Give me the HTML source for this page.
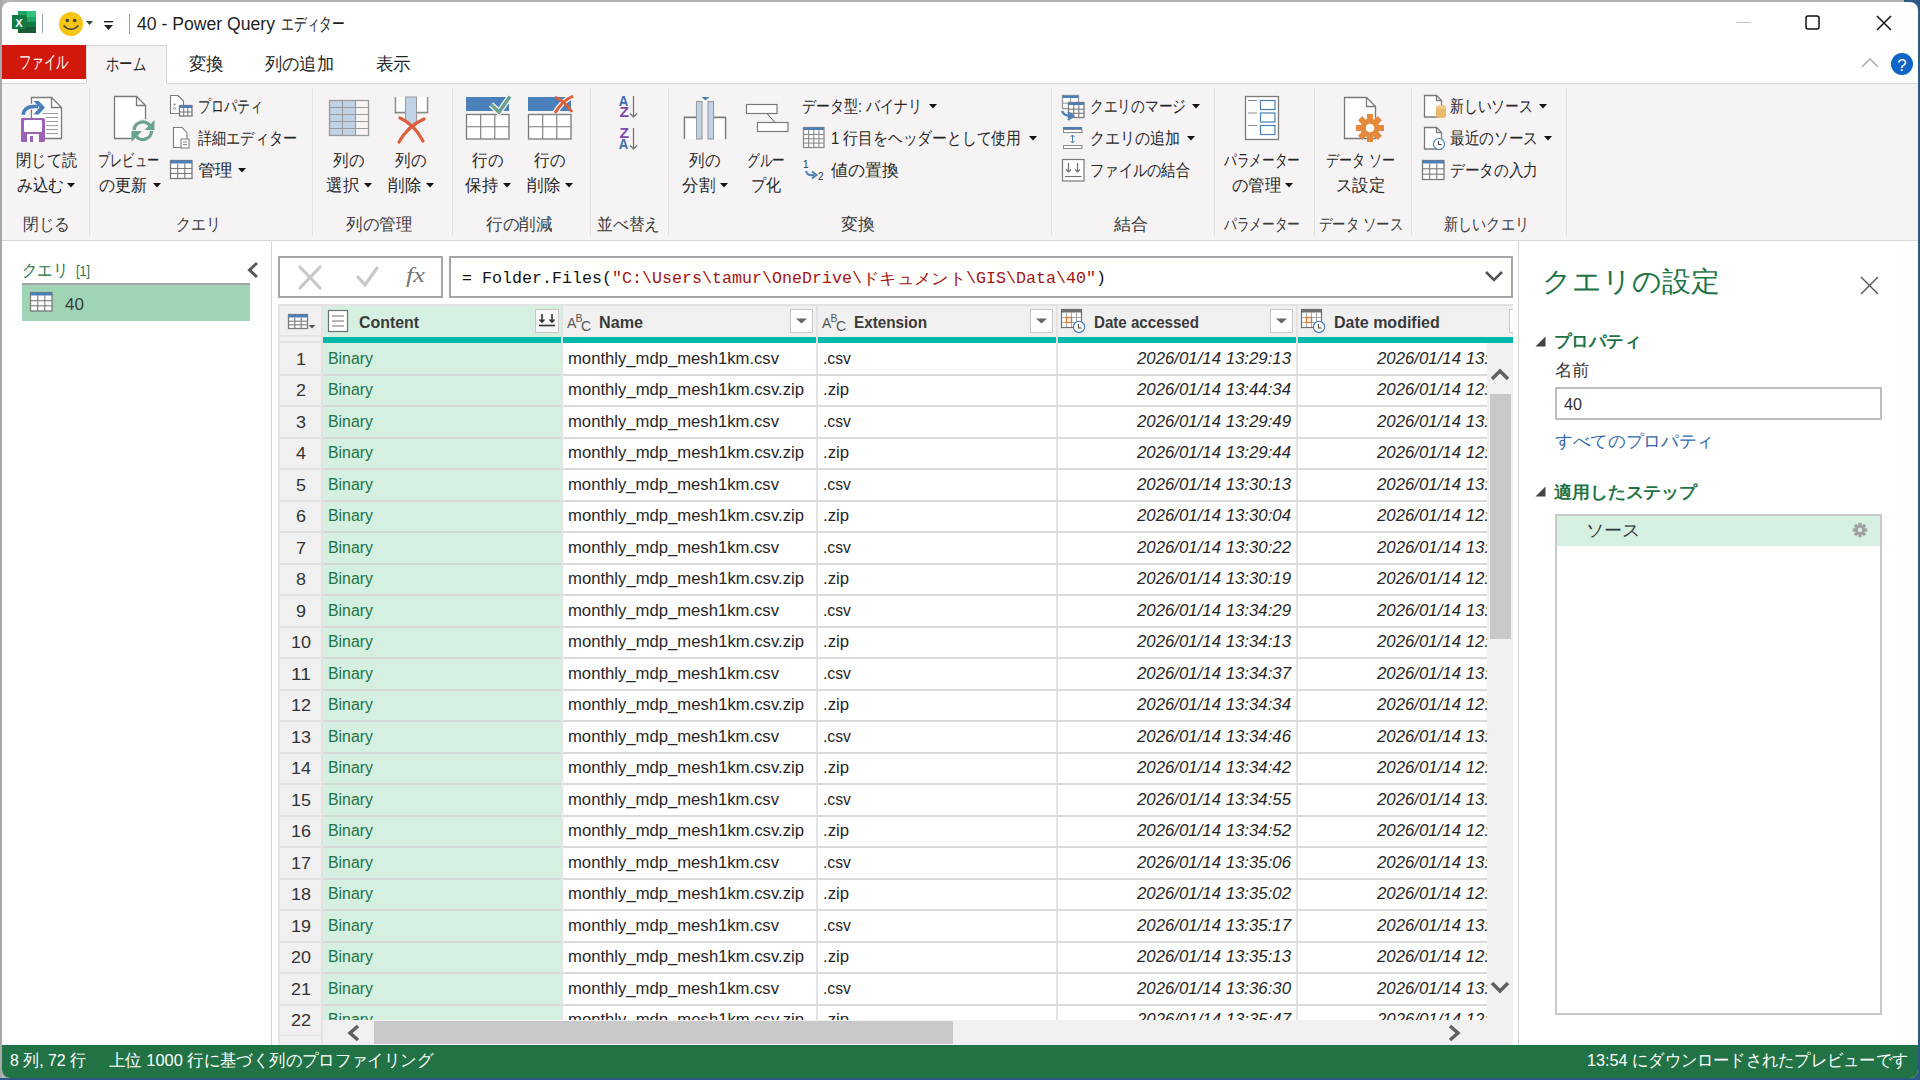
<!DOCTYPE html>
<html><head><meta charset="utf-8"><style>
html,body{margin:0;padding:0;width:1920px;height:1080px;overflow:hidden;background:#2d5a85;font-family:'Liberation Sans', sans-serif;}
.a{position:absolute;}
.t{position:absolute;white-space:pre;}
svg.a{overflow:visible;}
</style></head><body>
<div class="a" style="left:0px;top:0px;width:1920px;height:1080px;background:#2d5a85;"></div>
<div class="a" style="left:0px;top:0px;width:1904px;height:1078px;background:#b3b3b3;"></div>
<div class="a" style="left:0px;top:0px;width:2px;height:1078px;background:#a8a8a8;"></div>
<div class="a" style="left:2px;top:2px;width:1916px;height:1076px;background:#ffffff;border-radius:8px 8px 8px 8px;"></div>
<svg class="a" style="left:12px;top:11px" width="24" height="22" viewBox="0 0 24 22">
<rect x="6" y="0" width="18" height="22" fill="#1d6f42"/>
<rect x="15" y="0" width="9" height="6" fill="#33c481"/>
<rect x="6" y="0" width="9" height="6" fill="#21a366"/>
<rect x="15" y="6" width="9" height="5" fill="#21a366"/>
<rect x="15" y="11" width="9" height="5" fill="#107c41"/>
<rect x="6" y="16" width="18" height="6" fill="#185c37"/>
<rect x="0" y="4" width="14" height="14" fill="#107c41"/>
<text x="7" y="15.5" font-family="Liberation Sans" font-weight="700" font-size="11" fill="#fff" text-anchor="middle">X</text>
</svg>
<div class="a" style="left:42px;top:14px;width:1px;height:19px;background:#8fa39a;"></div>
<svg class="a" style="left:59px;top:12px" width="24" height="24" viewBox="0 0 24 24">
<circle cx="12" cy="12" r="12" fill="#f8c512"/>
<circle cx="8.3" cy="8.5" r="1.8" fill="#424242"/>
<circle cx="15.7" cy="8.5" r="1.8" fill="#424242"/>
<path d="M4.5 13.5 Q12 21 19.5 13.5" stroke="#424242" stroke-width="1.6" fill="none"/>
</svg>
<svg class="a" style="left:86px;top:21px" width="8" height="5" viewBox="0 0 8 5"><path d="M0 0 L7 0 L3.5 4 Z" fill="#2a4a3a"/></svg>
<svg class="a" style="left:104px;top:21px" width="10" height="10" viewBox="0 0 10 10"><rect x="0" y="0" width="9" height="1.4" fill="#222"/><path d="M0 4 L9 4 L4.5 9 Z" fill="#222"/></svg>
<div class="a" style="left:129px;top:14px;width:1px;height:20px;background:#8fa39a;"></div>
<span class="t" style="left:137.00px;top:11.50px;font-size:18px;line-height:25px;color:#1f1f1f;font-weight:400;font-style:normal;font-family:'Liberation Sans', sans-serif;transform:scaleX(0.9783);transform-origin:0 50%;">40 - Power Query</span>
<span class="t" style="left:281.00px;top:11.50px;font-size:18px;line-height:25px;color:#1f1f1f;font-weight:400;font-style:normal;font-family:'Liberation Sans', sans-serif;transform:scaleX(0.7111);transform-origin:0 50%;">エディター</span>
<div class="a" style="left:1736px;top:22px;width:15px;height:1px;background:#c4c4c4;"></div>
<svg class="a" style="left:1805px;top:15px" width="16" height="16" viewBox="0 0 16 16"><rect x="1" y="1" width="13" height="13" rx="2" fill="none" stroke="#111" stroke-width="1.5"/></svg>
<svg class="a" style="left:1876px;top:15px" width="16" height="16" viewBox="0 0 16 16"><path d="M1 1 L15 15 M15 1 L1 15" stroke="#111" stroke-width="1.5"/></svg>
<div class="a" style="left:2px;top:45px;width:84px;height:34px;background:#d1180b;"></div>
<span class="t" style="left:18.50px;top:49.50px;font-size:18px;line-height:25px;color:#ffffff;font-weight:400;font-style:normal;font-family:'Liberation Sans', sans-serif;transform:scaleX(0.6944);transform-origin:0 50%;">ファイル</span>
<div class="a" style="left:86px;top:45px;width:81px;height:39px;background:#f5f3f4;border:1px solid #d6d6d6;border-bottom:none;box-sizing:border-box;"></div>
<span class="t" style="left:106.00px;top:51.50px;font-size:18px;line-height:25px;color:#262626;font-weight:400;font-style:normal;font-family:'Liberation Sans', sans-serif;transform:scaleX(0.7407);transform-origin:0 50%;">ホーム</span>
<span class="t" style="left:188.50px;top:51.50px;font-size:18px;line-height:25px;color:#262626;font-weight:400;font-style:normal;font-family:'Liberation Sans', sans-serif;transform:scaleX(0.9722);transform-origin:0 50%;">変換</span>
<span class="t" style="left:264.50px;top:51.50px;font-size:18px;line-height:25px;color:#262626;font-weight:400;font-style:normal;font-family:'Liberation Sans', sans-serif;transform:scaleX(0.9583);transform-origin:0 50%;">列の追加</span>
<span class="t" style="left:375.50px;top:51.50px;font-size:18px;line-height:25px;color:#262626;font-weight:400;font-style:normal;font-family:'Liberation Sans', sans-serif;transform:scaleX(0.9722);transform-origin:0 50%;">表示</span>
<svg class="a" style="left:1861px;top:57px" width="18" height="12" viewBox="0 0 18 12"><path d="M1 10 L9 2 L17 10" stroke="#b0b0b0" stroke-width="1.6" fill="none"/></svg>
<svg class="a" style="left:1891px;top:53px" width="22" height="22" viewBox="0 0 22 22"><circle cx="11" cy="11" r="11" fill="#0f64c8"/><text x="11" y="17.5" font-family="Liberation Sans" font-size="17" fill="#fff" text-anchor="middle">?</text></svg>
<div class="a" style="left:2px;top:83px;width:1916px;height:158px;background:#f5f3f4;"></div>
<div class="a" style="left:2px;top:83px;width:84px;height:1px;background:#d6d6d6;"></div>
<div class="a" style="left:167px;top:83px;width:1751px;height:1px;background:#d6d6d6;"></div>
<div class="a" style="left:2px;top:240px;width:1916px;height:1px;background:#d9d9d9;"></div>
<div class="a" style="left:89px;top:88px;width:1px;height:148px;background:#e1e1e1;"></div>
<div class="a" style="left:312px;top:88px;width:1px;height:148px;background:#e1e1e1;"></div>
<div class="a" style="left:452px;top:88px;width:1px;height:148px;background:#e1e1e1;"></div>
<div class="a" style="left:590px;top:88px;width:1px;height:148px;background:#e1e1e1;"></div>
<div class="a" style="left:668px;top:88px;width:1px;height:148px;background:#e1e1e1;"></div>
<div class="a" style="left:1051px;top:88px;width:1px;height:148px;background:#e1e1e1;"></div>
<div class="a" style="left:1214px;top:88px;width:1px;height:148px;background:#e1e1e1;"></div>
<div class="a" style="left:1314px;top:88px;width:1px;height:148px;background:#e1e1e1;"></div>
<div class="a" style="left:1411px;top:88px;width:1px;height:148px;background:#e1e1e1;"></div>
<div class="a" style="left:1566px;top:88px;width:1px;height:148px;background:#e1e1e1;"></div>
<svg class="a" style="left:0px;top:0px" width="100" height="240" viewBox="0 0 100 240"><path d="M31.5 97.5 H51.5 L61.5 107.5 V138.5 H31.5 Z" fill="#fff" stroke="#7a7a7a" stroke-width="1.3"/><path d="M51.5 97.5 V107.5 H61.5" fill="none" stroke="#7a7a7a" stroke-width="1.3"/><line x1="42.5" y1="113.5" x2="58" y2="113.5" stroke="#9a9a9a" stroke-width="1"/><line x1="46" y1="117.5" x2="58" y2="117.5" stroke="#9a9a9a" stroke-width="1"/><line x1="46" y1="121.5" x2="58" y2="121.5" stroke="#9a9a9a" stroke-width="1"/><line x1="46" y1="125.6" x2="58" y2="125.6" stroke="#9a9a9a" stroke-width="1"/><line x1="46" y1="129.6" x2="58" y2="129.6" stroke="#9a9a9a" stroke-width="1"/><line x1="46" y1="133.6" x2="58" y2="133.6" stroke="#9a9a9a" stroke-width="1"/><rect x="21" y="118" width="24" height="24" rx="1.5" fill="#9a62b3"/><rect x="24" y="120" width="18" height="12" rx="1.2" fill="#fff"/><rect x="27" y="134" width="12" height="8" rx="1" fill="#fff"/><rect x="30" y="136" width="3" height="6" fill="#9a62b3"/><path d="M31.5 104 V116" stroke="#f5f3f4" stroke-width="0"/><path d="M23 114.8 Q24 106.5 34 106.5 H38" stroke="#f5f3f4" stroke-width="6" fill="none"/><path d="M23 114.8 Q24 106.5 34 106.5 H38" stroke="#4a7fba" stroke-width="3.6" fill="none"/><path d="M33.5 101 H38.8 L45 107.6 L38.8 114.5 H33.5 L39.5 107.6 Z" fill="#4a7fba"/></svg>
<span class="t" style="left:15.50px;top:149.00px;font-size:17px;line-height:24px;color:#262626;font-weight:400;font-style:normal;font-family:'Liberation Sans', sans-serif;transform:scaleX(0.8971);transform-origin:0 50%;">閉じて読</span>
<span class="t" style="left:16.50px;top:174.00px;font-size:17px;line-height:24px;color:#262626;font-weight:400;font-style:normal;font-family:'Liberation Sans', sans-serif;transform:scaleX(0.9216);transform-origin:0 50%;">み込む</span>
<svg class="a" style="left:67px;top:183px" width="9" height="5" viewBox="0 0 9 5"><path d="M0 0 H8 L4 4.5 Z" fill="#111"/></svg>
<svg class="a" style="left:0px;top:0px" width="170" height="240" viewBox="0 0 170 240"><path d="M114.5 96.5 H136.5 L145.5 105.5 V138.5 H114.5 Z" fill="#fff" stroke="#7a7a7a" stroke-width="1.3"/><path d="M136.5 96.5 V105.5 H145.5" fill="none" stroke="#7a7a7a" stroke-width="1.3"/><circle cx="143" cy="131" r="12" fill="#f5f3f4"/><path d="M134 130.7 A8.8 8.8 0 0 1 150.4 126.3" fill="none" stroke="#6aa38c" stroke-width="3.3"/><path d="M151.6 130.7 A8.8 8.8 0 0 1 135.2 135.1" fill="none" stroke="#6aa38c" stroke-width="3.3"/><path d="M154.5 120 V130 H144.5 Z" fill="#6aa38c"/><path d="M131.5 142 V131 H142 Z" fill="#6aa38c"/><rect x="132" y="130" width="23" height="1" fill="#f5f3f4"/></svg>
<span class="t" style="left:97.50px;top:149.00px;font-size:17px;line-height:24px;color:#262626;font-weight:400;font-style:normal;font-family:'Liberation Sans', sans-serif;transform:scaleX(0.7176);transform-origin:0 50%;">プレビュー</span>
<span class="t" style="left:99.00px;top:174.00px;font-size:17px;line-height:24px;color:#262626;font-weight:400;font-style:normal;font-family:'Liberation Sans', sans-serif;transform:scaleX(0.9412);transform-origin:0 50%;">の更新</span>
<svg class="a" style="left:153px;top:183px" width="9" height="5" viewBox="0 0 9 5"><path d="M0 0 H8 L4 4.5 Z" fill="#111"/></svg>
<svg class="a" style="left:0px;top:0px" width="320" height="240" viewBox="0 0 320 240"><path d="M170.5 95.5 H178 L183.5 101 V113.5 H170.5 Z" fill="#fff" stroke="#7a7a7a" stroke-width="1.1"/><circle cx="174.5" cy="104.5" r="1.1" fill="#888"/><circle cx="174.5" cy="108.5" r="1.1" fill="none" stroke="#888" stroke-width=".8"/><rect x="179.5" y="105.5" width="12.5" height="10.5" fill="#fff" stroke="#7a7a7a" stroke-width="1.3"/><rect x="179.5" y="105.5" width="12.5" height="2.5" fill="#4a7fba"/><line x1="183.7" y1="108.0" x2="183.7" y2="116.0" stroke="#7a7a7a" stroke-width="1.1"/><line x1="187.8" y1="108.0" x2="187.8" y2="116.0" stroke="#7a7a7a" stroke-width="1.1"/><line x1="179.5" y1="112.0" x2="192.0" y2="112.0" stroke="#7a7a7a" stroke-width="1.1"/><path d="M173.5 127.5 H182 L187 133 V147.5 H173.5 Z" fill="#fff" stroke="#7a7a7a" stroke-width="1.1"/><rect x="181" y="139" width="8" height="9" fill="#fff" stroke="#7a7a7a" stroke-width="1"/><line x1="183" y1="142" x2="187" y2="142" stroke="#888"/><line x1="183" y1="144.5" x2="187" y2="144.5" stroke="#888"/><rect x="170.5" y="160.5" width="21.5" height="18" fill="#fff" stroke="#7a7a7a" stroke-width="1.3"/><rect x="170.5" y="160.5" width="21.5" height="3" fill="#4a7fba"/><line x1="177.7" y1="163.5" x2="177.7" y2="178.5" stroke="#7a7a7a" stroke-width="1.1"/><line x1="184.8" y1="163.5" x2="184.8" y2="178.5" stroke="#7a7a7a" stroke-width="1.1"/><line x1="170.5" y1="168.5" x2="192.0" y2="168.5" stroke="#7a7a7a" stroke-width="1.1"/><line x1="170.5" y1="173.5" x2="192.0" y2="173.5" stroke="#7a7a7a" stroke-width="1.1"/></svg>
<span class="t" style="left:198.00px;top:95.00px;font-size:17px;line-height:24px;color:#262626;font-weight:400;font-style:normal;font-family:'Liberation Sans', sans-serif;transform:scaleX(0.7647);transform-origin:0 50%;">プロパティ</span>
<span class="t" style="left:198.00px;top:127.00px;font-size:17px;line-height:24px;color:#262626;font-weight:400;font-style:normal;font-family:'Liberation Sans', sans-serif;transform:scaleX(0.8319);transform-origin:0 50%;">詳細エディター</span>
<span class="t" style="left:198.00px;top:159.00px;font-size:17px;line-height:24px;color:#262626;font-weight:400;font-style:normal;font-family:'Liberation Sans', sans-serif;transform:scaleX(1.0294);transform-origin:0 50%;">管理</span>
<svg class="a" style="left:238px;top:168px" width="9" height="5" viewBox="0 0 9 5"><path d="M0 0 H8 L4 4.5 Z" fill="#111"/></svg>
<svg class="a" style="left:0px;top:0px" width="460" height="240" viewBox="0 0 460 240"><rect x="329.5" y="100.5" width="26" height="35" fill="#c0d3e6"/><rect x="329.5" y="100.5" width="39" height="35" fill="none" stroke="#9a9a9a" stroke-width="1.3"/><line x1="342.5" y1="100.5" x2="342.5" y2="135.5" stroke="#9a9a9a" stroke-width="1.1"/><line x1="355.5" y1="100.5" x2="355.5" y2="135.5" stroke="#9a9a9a" stroke-width="1.1"/><line x1="329.5" y1="107.5" x2="368.5" y2="107.5" stroke="#9a9a9a" stroke-width="1.1"/><line x1="329.5" y1="114.5" x2="368.5" y2="114.5" stroke="#9a9a9a" stroke-width="1.1"/><line x1="329.5" y1="121.5" x2="368.5" y2="121.5" stroke="#9a9a9a" stroke-width="1.1"/><line x1="329.5" y1="128.5" x2="368.5" y2="128.5" stroke="#9a9a9a" stroke-width="1.1"/><path d="M395.5 113.5 V97 M395.5 112.5 H405.5 M416.5 112.5 H427.5 V97" fill="none" stroke="#8a8a8a" stroke-width="1.3"/><rect x="396" y="97" width="31" height="15.5" fill="#fff"/><path d="M395.5 97 V112.5 H405 M417 112.5 H427.5 V97" fill="none" stroke="#8a8a8a" stroke-width="1.3"/><path d="M405.5 97 V122 L411 126 L416.5 122 V97 Z" fill="#c0d3e6" stroke="#9a9a9a" stroke-width="1.1"/><path d="M399 142 Q408 126 424 119" stroke="#d9603b" stroke-width="3.2" fill="none" stroke-linecap="round"/><path d="M400 118 Q414 124 423 141" stroke="#d9603b" stroke-width="3.2" fill="none" stroke-linecap="round"/></svg>
<span class="t" style="left:332.50px;top:149.00px;font-size:17px;line-height:24px;color:#262626;font-weight:400;font-style:normal;font-family:'Liberation Sans', sans-serif;transform:scaleX(0.9118);transform-origin:0 50%;">列の</span>
<span class="t" style="left:325.50px;top:174.00px;font-size:17px;line-height:24px;color:#262626;font-weight:400;font-style:normal;font-family:'Liberation Sans', sans-serif;transform:scaleX(0.9706);transform-origin:0 50%;">選択</span>
<svg class="a" style="left:364px;top:183px" width="9" height="5" viewBox="0 0 9 5"><path d="M0 0 H8 L4 4.5 Z" fill="#111"/></svg>
<span class="t" style="left:394.50px;top:149.00px;font-size:17px;line-height:24px;color:#262626;font-weight:400;font-style:normal;font-family:'Liberation Sans', sans-serif;transform:scaleX(0.9118);transform-origin:0 50%;">列の</span>
<span class="t" style="left:387.50px;top:174.00px;font-size:17px;line-height:24px;color:#262626;font-weight:400;font-style:normal;font-family:'Liberation Sans', sans-serif;transform:scaleX(0.9706);transform-origin:0 50%;">削除</span>
<svg class="a" style="left:426px;top:183px" width="9" height="5" viewBox="0 0 9 5"><path d="M0 0 H8 L4 4.5 Z" fill="#111"/></svg>
<svg class="a" style="left:0px;top:0px" width="600" height="240" viewBox="0 0 600 240"><rect x="466" y="97" width="43" height="14" fill="#4a7fba"/><rect x="466.5" y="114.5" width="42.5" height="24.5" fill="#fff" stroke="#7a7a7a" stroke-width="1.3"/><line x1="480.7" y1="114.5" x2="480.7" y2="139.0" stroke="#7a7a7a" stroke-width="1.1"/><line x1="494.8" y1="114.5" x2="494.8" y2="139.0" stroke="#7a7a7a" stroke-width="1.1"/><line x1="466.5" y1="126.8" x2="509.0" y2="126.8" stroke="#7a7a7a" stroke-width="1.1"/><path d="M491 104.5 L499 112 L510 96.5" stroke="#f5f3f4" stroke-width="6" fill="none"/><path d="M491 104.5 L499 112 L510 96.5" stroke="#6aa38c" stroke-width="3.5" fill="none"/><rect x="528" y="97" width="43" height="14" fill="#4a7fba"/><rect x="528.5" y="114.5" width="42.5" height="24.5" fill="#fff" stroke="#7a7a7a" stroke-width="1.3"/><line x1="542.7" y1="114.5" x2="542.7" y2="139.0" stroke="#7a7a7a" stroke-width="1.1"/><line x1="556.8" y1="114.5" x2="556.8" y2="139.0" stroke="#7a7a7a" stroke-width="1.1"/><line x1="528.5" y1="126.8" x2="571.0" y2="126.8" stroke="#7a7a7a" stroke-width="1.1"/><path d="M555 113 Q562 101 573 96" stroke="#f5f3f4" stroke-width="5.5" fill="none"/><path d="M555 97 Q566 102 572 112" stroke="#d9603b" stroke-width="3" fill="none"/><path d="M555 113 Q562 101 573 96" stroke="#d9603b" stroke-width="3" fill="none"/></svg>
<span class="t" style="left:471.50px;top:149.00px;font-size:17px;line-height:24px;color:#262626;font-weight:400;font-style:normal;font-family:'Liberation Sans', sans-serif;transform:scaleX(0.9118);transform-origin:0 50%;">行の</span>
<span class="t" style="left:464.50px;top:174.00px;font-size:17px;line-height:24px;color:#262626;font-weight:400;font-style:normal;font-family:'Liberation Sans', sans-serif;transform:scaleX(0.9706);transform-origin:0 50%;">保持</span>
<svg class="a" style="left:503px;top:183px" width="9" height="5" viewBox="0 0 9 5"><path d="M0 0 H8 L4 4.5 Z" fill="#111"/></svg>
<span class="t" style="left:533.50px;top:149.00px;font-size:17px;line-height:24px;color:#262626;font-weight:400;font-style:normal;font-family:'Liberation Sans', sans-serif;transform:scaleX(0.9118);transform-origin:0 50%;">行の</span>
<span class="t" style="left:526.50px;top:174.00px;font-size:17px;line-height:24px;color:#262626;font-weight:400;font-style:normal;font-family:'Liberation Sans', sans-serif;transform:scaleX(0.9706);transform-origin:0 50%;">削除</span>
<svg class="a" style="left:565px;top:183px" width="9" height="5" viewBox="0 0 9 5"><path d="M0 0 H8 L4 4.5 Z" fill="#111"/></svg>
<svg class="a" style="left:0px;top:0px" width="680" height="240" viewBox="0 0 680 240"><text x="618.7" y="106" font-family="Liberation Sans" font-weight="700" font-size="14.5" fill="#3c6fb0" textLength="9.5" lengthAdjust="spacingAndGlyphs">A</text><text x="619.5" y="117.3" font-family="Liberation Sans" font-weight="700" font-size="14.5" fill="#7c47b0" textLength="9.5" lengthAdjust="spacingAndGlyphs">Z</text><path d="M633.5 96 V117 M630 113.5 L633.5 117 L637 113.5" stroke="#707070" stroke-width="1.2" fill="none"/><text x="619.5" y="137.5" font-family="Liberation Sans" font-weight="700" font-size="14.5" fill="#7c47b0" textLength="9.5" lengthAdjust="spacingAndGlyphs">Z</text><text x="618.7" y="149" font-family="Liberation Sans" font-weight="700" font-size="14.5" fill="#3c6fb0" textLength="9.5" lengthAdjust="spacingAndGlyphs">A</text><path d="M633.5 128 V149 M630 145.5 L633.5 149 L637 145.5" stroke="#707070" stroke-width="1.2" fill="none"/></svg>
<svg class="a" style="left:0px;top:0px" width="800" height="240" viewBox="0 0 800 240"><path d="M684.5 139 V117.5 H696 M713.5 117.5 H725.5 V139" fill="#fff" stroke="#7a7a7a" stroke-width="1.3"/><rect x="685" y="118" width="11" height="21" fill="#fff"/><rect x="713" y="118" width="12" height="21" fill="#fff"/><path d="M684.5 139 V117.5 H696 M713.5 117.5 H725.5 V139" fill="none" stroke="#7a7a7a" stroke-width="1.3"/><rect x="696.5" y="101.5" width="5.5" height="37.5" fill="#c0d3e6" stroke="#9a9a9a" stroke-width="1.1"/><rect x="708" y="101.5" width="5.5" height="37.5" fill="#c0d3e6" stroke="#9a9a9a" stroke-width="1.1"/><path d="M701.5 97 H709.5 L705.5 100.5 Z" fill="#4a7fba"/><rect x="746.5" y="104.5" width="30.5" height="9" fill="#fff" stroke="#7a7a7a" stroke-width="1.2"/><rect x="757.5" y="122.5" width="30.5" height="9" fill="#fff" stroke="#7a7a7a" stroke-width="1.2"/><line x1="767" y1="113.5" x2="775" y2="122.5" stroke="#555" stroke-width="1"/></svg>
<span class="t" style="left:688.50px;top:149.00px;font-size:17px;line-height:24px;color:#262626;font-weight:400;font-style:normal;font-family:'Liberation Sans', sans-serif;transform:scaleX(0.9118);transform-origin:0 50%;">列の</span>
<span class="t" style="left:681.50px;top:174.00px;font-size:17px;line-height:24px;color:#262626;font-weight:400;font-style:normal;font-family:'Liberation Sans', sans-serif;transform:scaleX(0.9706);transform-origin:0 50%;">分割</span>
<svg class="a" style="left:720px;top:183px" width="9" height="5" viewBox="0 0 9 5"><path d="M0 0 H8 L4 4.5 Z" fill="#111"/></svg>
<span class="t" style="left:747.00px;top:149.00px;font-size:17px;line-height:24px;color:#262626;font-weight:400;font-style:normal;font-family:'Liberation Sans', sans-serif;transform:scaleX(0.7451);transform-origin:0 50%;">グルー</span>
<span class="t" style="left:751.00px;top:174.00px;font-size:17px;line-height:24px;color:#262626;font-weight:400;font-style:normal;font-family:'Liberation Sans', sans-serif;transform:scaleX(0.8824);transform-origin:0 50%;">プ化</span>
<span class="t" style="left:802.00px;top:95.00px;font-size:17px;line-height:24px;color:#262626;font-weight:400;font-style:normal;font-family:'Liberation Sans', sans-serif;transform:scaleX(0.8250);transform-origin:0 50%;">データ型: バイナリ</span>
<svg class="a" style="left:929px;top:104px" width="9" height="5" viewBox="0 0 9 5"><path d="M0 0 H8 L4 4.5 Z" fill="#111"/></svg>
<svg class="a" style="left:0px;top:0px" width="1060" height="240" viewBox="0 0 1060 240"><rect x="803.5" y="127.5" width="20.5" height="20" fill="#fff" stroke="#8a8a8a" stroke-width="1.3"/><rect x="803.5" y="127.5" width="20.5" height="2.5" fill="#4a7fba"/><line x1="808.6" y1="130.0" x2="808.6" y2="147.5" stroke="#8a8a8a" stroke-width="1.1"/><line x1="813.8" y1="130.0" x2="813.8" y2="147.5" stroke="#8a8a8a" stroke-width="1.1"/><line x1="818.9" y1="130.0" x2="818.9" y2="147.5" stroke="#8a8a8a" stroke-width="1.1"/><line x1="803.5" y1="134.4" x2="824.0" y2="134.4" stroke="#8a8a8a" stroke-width="1.1"/><line x1="803.5" y1="138.8" x2="824.0" y2="138.8" stroke="#8a8a8a" stroke-width="1.1"/><line x1="803.5" y1="143.1" x2="824.0" y2="143.1" stroke="#8a8a8a" stroke-width="1.1"/><text x="803" y="168" font-family="Liberation Sans" font-size="10" fill="#333">1</text><text x="818" y="180" font-family="Liberation Sans" font-size="10" fill="#333">2</text><path d="M806 171 Q807 176 814 175" stroke="#4a7fba" stroke-width="2" fill="none"/><path d="M812 171.5 L816.5 175 L812 178.5" stroke="#4a7fba" stroke-width="2" fill="none"/></svg>
<span class="t" style="left:831.00px;top:127.00px;font-size:17px;line-height:24px;color:#262626;font-weight:400;font-style:normal;font-family:'Liberation Sans', sans-serif;transform:scaleX(0.8708);transform-origin:0 50%;">1 行目をヘッダーとして使用</span>
<svg class="a" style="left:1029px;top:136px" width="9" height="5" viewBox="0 0 9 5"><path d="M0 0 H8 L4 4.5 Z" fill="#111"/></svg>
<span class="t" style="left:831.00px;top:159.00px;font-size:17px;line-height:24px;color:#262626;font-weight:400;font-style:normal;font-family:'Liberation Sans', sans-serif;">値の置換</span>
<svg class="a" style="left:0px;top:0px" width="1220" height="240" viewBox="0 0 1220 240"><rect x="1062.5" y="95.5" width="16" height="13" fill="#fff" stroke="#9a9a9a" stroke-width="1.3"/><rect x="1062.5" y="95.5" width="16" height="2.5" fill="#4a7fba"/><line x1="1070.5" y1="98.0" x2="1070.5" y2="108.5" stroke="#9a9a9a" stroke-width="1.1"/><line x1="1062.5" y1="103.2" x2="1078.5" y2="103.2" stroke="#9a9a9a" stroke-width="1.1"/><rect x="1068.5" y="102.5" width="15.5" height="15" fill="#fff" stroke="#7a7a7a" stroke-width="1.3"/><rect x="1068.5" y="102.5" width="15.5" height="2.5" fill="#4a7fba"/><line x1="1073.7" y1="105.0" x2="1073.7" y2="117.5" stroke="#7a7a7a" stroke-width="1.1"/><line x1="1078.8" y1="105.0" x2="1078.8" y2="117.5" stroke="#7a7a7a" stroke-width="1.1"/><line x1="1068.5" y1="109.2" x2="1084.0" y2="109.2" stroke="#7a7a7a" stroke-width="1.1"/><line x1="1068.5" y1="113.3" x2="1084.0" y2="113.3" stroke="#7a7a7a" stroke-width="1.1"/><path d="M1062 111 Q1064 116 1071 116" stroke="#4a7fba" stroke-width="2.2" fill="none"/><path d="M1068 112 L1073 116 L1068 120" stroke="#4a7fba" stroke-width="2.2" fill="none"/><rect x="1063" y="127" width="19" height="3" fill="#4a7fba"/><rect x="1063.5" y="129.5" width="18.5" height="3" fill="#fff" stroke="#8a8a8a" stroke-width="1"/><rect x="1063.5" y="145.5" width="18.5" height="3" fill="#fff" stroke="#8a8a8a" stroke-width="1"/><path d="M1072.5 135 V143 M1070.5 137 L1072.5 135 L1074.5 137 M1070.5 141 L1072.5 143 L1074.5 141" stroke="#4a7fba" stroke-width="1" fill="none"/><rect x="1062.5" y="159.5" width="21.5" height="21.5" fill="#fff" stroke="#7a7a7a" stroke-width="1.2"/><path d="M1068.5 163 V172 M1066 169.5 L1068.5 172 L1071 169.5 M1077.5 163 V172 M1075 169.5 L1077.5 172 L1080 169.5" stroke="#707070" stroke-width="1.2" fill="none"/><line x1="1065" y1="176.5" x2="1081.5" y2="176.5" stroke="#707070" stroke-width="1.1"/></svg>
<span class="t" style="left:1090.00px;top:95.00px;font-size:17px;line-height:24px;color:#262626;font-weight:400;font-style:normal;font-family:'Liberation Sans', sans-serif;transform:scaleX(0.8067);transform-origin:0 50%;">クエリのマージ</span>
<svg class="a" style="left:1192px;top:104px" width="9" height="5" viewBox="0 0 9 5"><path d="M0 0 H8 L4 4.5 Z" fill="#111"/></svg>
<span class="t" style="left:1090.00px;top:127.00px;font-size:17px;line-height:24px;color:#262626;font-weight:400;font-style:normal;font-family:'Liberation Sans', sans-serif;transform:scaleX(0.8824);transform-origin:0 50%;">クエリの追加</span>
<svg class="a" style="left:1187px;top:136px" width="9" height="5" viewBox="0 0 9 5"><path d="M0 0 H8 L4 4.5 Z" fill="#111"/></svg>
<span class="t" style="left:1090.00px;top:159.00px;font-size:17px;line-height:24px;color:#262626;font-weight:400;font-style:normal;font-family:'Liberation Sans', sans-serif;transform:scaleX(0.8403);transform-origin:0 50%;">ファイルの結合</span>
<svg class="a" style="left:0px;top:0px" width="1420" height="240" viewBox="0 0 1420 240"><rect x="1245.5" y="96.5" width="33" height="43" fill="#fff" stroke="#7a7a7a" stroke-width="1.3"/><rect x="1260.5" y="100.5" width="14.5" height="9" fill="#fff" stroke="#4a7fba" stroke-width="1.2"/><line x1="1248" y1="100.5" x2="1257" y2="100.5" stroke="#888" stroke-width="1"/><rect x="1260.5" y="113.0" width="14.5" height="9" fill="#fff" stroke="#4a7fba" stroke-width="1.2"/><line x1="1248" y1="113.0" x2="1257" y2="113.0" stroke="#888" stroke-width="1"/><rect x="1260.5" y="125.5" width="14.5" height="9" fill="#fff" stroke="#4a7fba" stroke-width="1.2"/><line x1="1248" y1="125.5" x2="1257" y2="125.5" stroke="#888" stroke-width="1"/><path d="M1344.5 97.5 H1366.5 L1375.5 106.5 V138.5 H1344.5 Z" fill="#fff" stroke="#7a7a7a" stroke-width="1.3"/><path d="M1366.5 97.5 V106.5 H1375.5" fill="none" stroke="#7a7a7a" stroke-width="1.3"/><g transform="translate(1370 128)"><circle r="9.5" fill="#e58a3c"/><rect x="-3" y="-14" width="6" height="6" fill="#e58a3c" transform="rotate(0)"/><rect x="-3" y="-14" width="6" height="6" fill="#e58a3c" transform="rotate(45)"/><rect x="-3" y="-14" width="6" height="6" fill="#e58a3c" transform="rotate(90)"/><rect x="-3" y="-14" width="6" height="6" fill="#e58a3c" transform="rotate(135)"/><rect x="-3" y="-14" width="6" height="6" fill="#e58a3c" transform="rotate(180)"/><rect x="-3" y="-14" width="6" height="6" fill="#e58a3c" transform="rotate(225)"/><rect x="-3" y="-14" width="6" height="6" fill="#e58a3c" transform="rotate(270)"/><rect x="-3" y="-14" width="6" height="6" fill="#e58a3c" transform="rotate(315)"/><circle r="4.3" fill="#fff"/></g></svg>
<span class="t" style="left:1224.00px;top:149.00px;font-size:17px;line-height:24px;color:#262626;font-weight:400;font-style:normal;font-family:'Liberation Sans', sans-serif;transform:scaleX(0.7451);transform-origin:0 50%;">パラメーター</span>
<span class="t" style="left:1231.50px;top:174.00px;font-size:17px;line-height:24px;color:#262626;font-weight:400;font-style:normal;font-family:'Liberation Sans', sans-serif;transform:scaleX(0.9608);transform-origin:0 50%;">の管理</span>
<svg class="a" style="left:1285px;top:183px" width="9" height="5" viewBox="0 0 9 5"><path d="M0 0 H8 L4 4.5 Z" fill="#111"/></svg>
<span class="t" style="left:1325.50px;top:149.00px;font-size:17px;line-height:24px;color:#262626;font-weight:400;font-style:normal;font-family:'Liberation Sans', sans-serif;transform:scaleX(0.7689);transform-origin:0 50%;">データ ソー</span>
<span class="t" style="left:1335.50px;top:174.00px;font-size:17px;line-height:24px;color:#262626;font-weight:400;font-style:normal;font-family:'Liberation Sans', sans-serif;transform:scaleX(0.9608);transform-origin:0 50%;">ス設定</span>
<svg class="a" style="left:0px;top:0px" width="1580" height="240" viewBox="0 0 1580 240"><path d="M1424.5 95.5 H1436.5 L1441.5 100.5 V117.0 H1424.5 Z" fill="#fff" stroke="#7a7a7a" stroke-width="1.3"/><path d="M1436.5 95.5 V100.5 H1441.5" fill="none" stroke="#7a7a7a" stroke-width="1.3"/><path d="M1436 107 V116 A5 2 0 0 0 1446 116 V107 Z" fill="#e8b96a"/><ellipse cx="1441" cy="107" rx="5" ry="2" fill="#f0cc8a"/><path d="M1424.5 127.5 H1436.5 L1441.5 132.5 V149.0 H1424.5 Z" fill="#fff" stroke="#7a7a7a" stroke-width="1.3"/><path d="M1436.5 127.5 V132.5 H1441.5" fill="none" stroke="#7a7a7a" stroke-width="1.3"/><circle cx="1439" cy="144" r="5.5" fill="#fff" stroke="#4a7fba" stroke-width="1.2"/><path d="M1438.5 141 V144.5 H1441.5" stroke="#333" stroke-width="1" fill="none"/><rect x="1422.5" y="160.5" width="21.5" height="19" fill="#fff" stroke="#7a7a7a" stroke-width="1.3"/><rect x="1422.5" y="160.5" width="21.5" height="3" fill="#4a7fba"/><line x1="1429.7" y1="163.5" x2="1429.7" y2="179.5" stroke="#7a7a7a" stroke-width="1.1"/><line x1="1436.8" y1="163.5" x2="1436.8" y2="179.5" stroke="#7a7a7a" stroke-width="1.1"/><line x1="1422.5" y1="168.8" x2="1444.0" y2="168.8" stroke="#7a7a7a" stroke-width="1.1"/><line x1="1422.5" y1="174.2" x2="1444.0" y2="174.2" stroke="#7a7a7a" stroke-width="1.1"/></svg>
<span class="t" style="left:1450.00px;top:95.00px;font-size:17px;line-height:24px;color:#262626;font-weight:400;font-style:normal;font-family:'Liberation Sans', sans-serif;transform:scaleX(0.8137);transform-origin:0 50%;">新しいソース</span>
<svg class="a" style="left:1539px;top:104px" width="9" height="5" viewBox="0 0 9 5"><path d="M0 0 H8 L4 4.5 Z" fill="#111"/></svg>
<span class="t" style="left:1450.00px;top:127.00px;font-size:17px;line-height:24px;color:#262626;font-weight:400;font-style:normal;font-family:'Liberation Sans', sans-serif;transform:scaleX(0.8627);transform-origin:0 50%;">最近のソース</span>
<svg class="a" style="left:1544px;top:136px" width="9" height="5" viewBox="0 0 9 5"><path d="M0 0 H8 L4 4.5 Z" fill="#111"/></svg>
<span class="t" style="left:1450.00px;top:159.00px;font-size:17px;line-height:24px;color:#262626;font-weight:400;font-style:normal;font-family:'Liberation Sans', sans-serif;transform:scaleX(0.8627);transform-origin:0 50%;">データの入力</span>
<span class="t" style="left:22.50px;top:213.00px;font-size:17px;line-height:24px;color:#3a3a3a;font-weight:400;font-style:normal;font-family:'Liberation Sans', sans-serif;transform:scaleX(0.9216);transform-origin:0 50%;">閉じる</span>
<span class="t" style="left:175.50px;top:213.00px;font-size:17px;line-height:24px;color:#3a3a3a;font-weight:400;font-style:normal;font-family:'Liberation Sans', sans-serif;transform:scaleX(0.8824);transform-origin:0 50%;">クエリ</span>
<span class="t" style="left:346.00px;top:213.00px;font-size:17px;line-height:24px;color:#3a3a3a;font-weight:400;font-style:normal;font-family:'Liberation Sans', sans-serif;transform:scaleX(0.9706);transform-origin:0 50%;">列の管理</span>
<span class="t" style="left:486.00px;top:213.00px;font-size:17px;line-height:24px;color:#3a3a3a;font-weight:400;font-style:normal;font-family:'Liberation Sans', sans-serif;transform:scaleX(0.9706);transform-origin:0 50%;">行の削減</span>
<span class="t" style="left:596.50px;top:213.00px;font-size:17px;line-height:24px;color:#3a3a3a;font-weight:400;font-style:normal;font-family:'Liberation Sans', sans-serif;transform:scaleX(0.9265);transform-origin:0 50%;">並べ替え</span>
<span class="t" style="left:841.00px;top:213.00px;font-size:17px;line-height:24px;color:#3a3a3a;font-weight:400;font-style:normal;font-family:'Liberation Sans', sans-serif;">変換</span>
<span class="t" style="left:1114.00px;top:213.00px;font-size:17px;line-height:24px;color:#3a3a3a;font-weight:400;font-style:normal;font-family:'Liberation Sans', sans-serif;">結合</span>
<span class="t" style="left:1224.00px;top:213.00px;font-size:17px;line-height:24px;color:#3a3a3a;font-weight:400;font-style:normal;font-family:'Liberation Sans', sans-serif;transform:scaleX(0.7451);transform-origin:0 50%;">パラメーター</span>
<span class="t" style="left:1319.00px;top:213.00px;font-size:17px;line-height:24px;color:#3a3a3a;font-weight:400;font-style:normal;font-family:'Liberation Sans', sans-serif;transform:scaleX(0.7870);transform-origin:0 50%;">データ ソース</span>
<span class="t" style="left:1443.50px;top:213.00px;font-size:17px;line-height:24px;color:#3a3a3a;font-weight:400;font-style:normal;font-family:'Liberation Sans', sans-serif;transform:scaleX(0.8333);transform-origin:0 50%;">新しいクエリ</span>
<div class="a" style="left:2px;top:241px;width:269px;height:804px;background:#ffffff;"></div>
<div class="a" style="left:271px;top:241px;width:1px;height:804px;background:#d4d4d4;"></div>
<span class="t" style="left:22.00px;top:259.00px;font-size:17px;line-height:24px;color:#217346;font-weight:400;font-style:normal;font-family:'Liberation Sans', sans-serif;transform:scaleX(0.9020);transform-origin:0 50%;">クエリ</span>
<span class="t" style="left:76.00px;top:259.50px;font-size:15px;line-height:21px;color:#217346;font-weight:400;font-style:normal;font-family:'Liberation Sans', sans-serif;transform:scaleX(0.8390);transform-origin:0 50%;">[1]</span>
<svg class="a" style="left:246px;top:261px" width="14" height="18" viewBox="0 0 14 18"><path d="M11 2 L3.5 9 L11 16" stroke="#5a5a5a" stroke-width="3" fill="none"/></svg>
<div class="a" style="left:22px;top:283px;width:228px;height:38px;background:#9fd5b4;"></div>
<div class="a" style="left:22px;top:283px;width:228px;height:2px;background:#a6a6a6;"></div>
<svg class="a" style="left:0px;top:0px" width="60" height="320" viewBox="0 0 60 320"><rect x="30.5" y="292.5" width="21.5" height="18.5" fill="#fff" stroke="#7a7a7a" stroke-width="1.3"/><rect x="30.5" y="292.5" width="21.5" height="3" fill="#4a7fba"/><line x1="37.7" y1="295.5" x2="37.7" y2="311.0" stroke="#7a7a7a" stroke-width="1.1"/><line x1="44.8" y1="295.5" x2="44.8" y2="311.0" stroke="#7a7a7a" stroke-width="1.1"/><line x1="30.5" y1="300.7" x2="52.0" y2="300.7" stroke="#7a7a7a" stroke-width="1.1"/><line x1="30.5" y1="305.8" x2="52.0" y2="305.8" stroke="#7a7a7a" stroke-width="1.1"/></svg>
<span class="t" style="left:65.00px;top:293.00px;font-size:17px;line-height:24px;color:#3a3a3a;font-weight:400;font-style:normal;font-family:'Liberation Sans', sans-serif;">40</span>
<div class="a" style="left:272px;top:241px;width:1246px;height:804px;background:#ffffff;"></div>
<div class="a" style="left:1518px;top:241px;width:1px;height:804px;background:#d4d4d4;"></div>
<div class="a" style="left:278px;top:256px;width:165px;height:42px;background:#ffffff;border:2px solid #a6a6a6;box-sizing:border-box;"></div>
<svg class="a" style="left:0px;top:0px" width="460" height="300" viewBox="0 0 460 300"><path d="M300 267 L320 288 M320 267 L300 288" stroke="#c8c8c8" stroke-width="3.2" stroke-linecap="round"/><path d="M358 277 L365 285 L377 268" stroke="#c8c8c8" stroke-width="3.2" fill="none" stroke-linecap="round"/></svg>
<span class="t" style="left:406.00px;top:261.00px;font-size:20px;line-height:28px;color:#777;font-weight:400;font-style:italic;font-family:'Liberation Serif', serif;transform:scaleX(1.3160);transform-origin:0 50%;">fx</span>
<div class="a" style="left:449px;top:256px;width:1064px;height:42px;background:#fffffc;border:2px solid #a6a6a6;box-sizing:border-box;"></div>
<svg class="a" style="left:1484px;top:270px" width="20" height="12" viewBox="0 0 20 12"><path d="M2 2 L10 10 L18 2" stroke="#555" stroke-width="2.6" fill="none"/></svg>
<span class="t" style="left:462.00px;top:266.50px;font-size:16.5px;line-height:23px;color:#111;font-weight:400;font-style:normal;font-family:'Liberation Mono', monospace;transform:scaleX(1.0099);transform-origin:0 50%;">= Folder.Files(</span>
<span class="t" style="left:612.00px;top:266.50px;font-size:16.5px;line-height:23px;color:#a31515;font-weight:400;font-style:normal;font-family:'Liberation Mono', monospace;transform:scaleX(1.0099);transform-origin:0 50%;">&quot;C:\Users\tamur\OneDrive\</span>
<span class="t" style="left:862.00px;top:267.50px;font-size:16px;line-height:22px;color:#a31515;font-weight:400;font-style:normal;font-family:'Liberation Sans', sans-serif;transform:scaleX(1.0833);transform-origin:0 50%;">ドキュメント</span>
<span class="t" style="left:966.00px;top:266.50px;font-size:16.5px;line-height:23px;color:#a31515;font-weight:400;font-style:normal;font-family:'Liberation Mono', monospace;transform:scaleX(1.0098);transform-origin:0 50%;">\GIS\Data\40&quot;</span>
<span class="t" style="left:1096.00px;top:266.50px;font-size:16.5px;line-height:23px;color:#111;font-weight:400;font-style:normal;font-family:'Liberation Mono', monospace;transform:scaleX(1.0095);transform-origin:0 50%;">)</span>
<div class="a" style="left:278px;top:304px;width:1235px;height:2px;background:#e3e3e3;"></div>
<div class="a" style="left:278px;top:304px;width:2px;height:741px;background:#e3e3e3;"></div>
<div class="a" style="left:280px;top:306px;width:41px;height:29px;background:#f0f0f0;"></div>
<div class="a" style="left:280px;top:335px;width:41px;height:2px;background:#e3e3e3;"></div>
<div class="a" style="left:280px;top:337px;width:41px;height:4px;background:#f0f0f0;"></div>
<div class="a" style="left:280px;top:341px;width:41px;height:2px;background:#e3e3e3;"></div>
<div class="a" style="left:321px;top:306px;width:2px;height:739px;background:#e3e3e3;"></div>
<div class="a" style="left:323px;top:306px;width:238px;height:31px;background:#d5efe1;"></div>
<div class="a" style="left:563px;top:306px;width:253px;height:31px;background:#f0f0f0;"></div>
<div class="a" style="left:561px;top:306px;width:2px;height:739px;background:#e3e3e3;"></div>
<div class="a" style="left:818px;top:306px;width:238px;height:31px;background:#f0f0f0;"></div>
<div class="a" style="left:816px;top:306px;width:2px;height:739px;background:#e3e3e3;"></div>
<div class="a" style="left:1058px;top:306px;width:238px;height:31px;background:#f0f0f0;"></div>
<div class="a" style="left:1056px;top:306px;width:2px;height:739px;background:#e3e3e3;"></div>
<div class="a" style="left:1298px;top:306px;width:238px;height:31px;background:#f0f0f0;"></div>
<div class="a" style="left:1296px;top:306px;width:2px;height:739px;background:#e3e3e3;"></div>
<div class="a" style="left:323px;top:337px;width:1190px;height:6px;background:#01b8aa;"></div>
<div class="a" style="left:561px;top:337px;width:2px;height:6px;background:#d5efe1;"></div>
<div class="a" style="left:816px;top:337px;width:2px;height:6px;background:#e3e3e3;"></div>
<div class="a" style="left:1056px;top:337px;width:2px;height:6px;background:#e3e3e3;"></div>
<div class="a" style="left:1296px;top:337px;width:2px;height:6px;background:#e3e3e3;"></div>
<svg class="a" style="left:0px;top:0px" width="1520" height="340" viewBox="0 0 1520 340"><rect x="288.5" y="314.5" width="19" height="14" fill="#fff" stroke="#7a7a7a" stroke-width="1.3"/><rect x="288.5" y="314.5" width="19" height="3" fill="#4a7fba"/><line x1="294.8" y1="317.5" x2="294.8" y2="328.5" stroke="#7a7a7a" stroke-width="1.1"/><line x1="301.2" y1="317.5" x2="301.2" y2="328.5" stroke="#7a7a7a" stroke-width="1.1"/><line x1="288.5" y1="321.2" x2="307.5" y2="321.2" stroke="#7a7a7a" stroke-width="1.1"/><line x1="288.5" y1="324.8" x2="307.5" y2="324.8" stroke="#7a7a7a" stroke-width="1.1"/><path d="M308.5 325 H315.5 L312 328.5 Z" fill="#555"/><rect x="328.5" y="310.5" width="19" height="21" fill="#fff" stroke="#707070" stroke-width="1.2"/><line x1="332" y1="316" x2="344" y2="316" stroke="#707070"/><line x1="332" y1="321" x2="344" y2="321" stroke="#707070"/><line x1="332" y1="326" x2="344" y2="326" stroke="#707070"/><rect x="535.5" y="309.5" width="23" height="23" fill="#f7f7f7" stroke="#c8c8c8" stroke-width="1"/><path d="M542 314 V322 M539.5 319.5 L542 322 L544.5 319.5 M552 314 V322 M549.5 319.5 L552 322 L554.5 319.5" stroke="#333" stroke-width="1.6" fill="none"/><line x1="539" y1="325.5" x2="555" y2="325.5" stroke="#333" stroke-width="1.6"/><rect x="790.5" y="309.5" width="22" height="23" fill="#fff" stroke="#c8c8c8" stroke-width="1"/><path d="M796 318.5 H807 L801.5 323.5 Z" fill="#666"/><rect x="1030.5" y="309.5" width="22" height="23" fill="#fff" stroke="#c8c8c8" stroke-width="1"/><path d="M1036 318.5 H1047 L1041.5 323.5 Z" fill="#666"/><rect x="1270.5" y="309.5" width="22" height="23" fill="#fff" stroke="#c8c8c8" stroke-width="1"/><path d="M1276 318.5 H1287 L1281.5 323.5 Z" fill="#666"/><rect x="1509.5" y="309.5" width="22" height="23" fill="#fff" stroke="#c8c8c8" stroke-width="1"/><rect x="1061.5" y="309.5" width="20" height="18" fill="#fff" stroke="#707070" stroke-width="1.2"/><rect x="1061" y="309" width="21" height="3.5" fill="#707070"/><path d="M1066.5 312 V327 M1071.5 312 V327 M1076.5 312 V327 M1062 317.5 H1081 M1062 322.5 H1081" stroke="#a8a8a8" stroke-width="1"/><rect x="1066.5" y="317.5" width="5" height="5" fill="#fff" stroke="#e07a2e" stroke-width="1.4"/><circle cx="1079" cy="327" r="5.6" fill="#fff" stroke="#4a7fba" stroke-width="1.2"/><path d="M1078.5 324 V328 H1081.5" stroke="#444" stroke-width="1.1" fill="none"/><rect x="1301.5" y="309.5" width="20" height="18" fill="#fff" stroke="#707070" stroke-width="1.2"/><rect x="1301" y="309" width="21" height="3.5" fill="#707070"/><path d="M1306.5 312 V327 M1311.5 312 V327 M1316.5 312 V327 M1302 317.5 H1321 M1302 322.5 H1321" stroke="#a8a8a8" stroke-width="1"/><rect x="1306.5" y="317.5" width="5" height="5" fill="#fff" stroke="#e07a2e" stroke-width="1.4"/><circle cx="1319" cy="327" r="5.6" fill="#fff" stroke="#4a7fba" stroke-width="1.2"/><path d="M1318.5 324 V328 H1321.5" stroke="#444" stroke-width="1.1" fill="none"/><text x="567" y="328" font-family="Liberation Sans" font-size="14" fill="#555">A</text><text x="575.5" y="322" font-family="Liberation Sans" font-size="10.5" fill="#555">B</text><text x="581" y="331" font-family="Liberation Sans" font-size="14" fill="#555">C</text><text x="822" y="328" font-family="Liberation Sans" font-size="14" fill="#555">A</text><text x="830.5" y="322" font-family="Liberation Sans" font-size="10.5" fill="#555">B</text><text x="836" y="331" font-family="Liberation Sans" font-size="14" fill="#555">C</text></svg>
<span class="t" style="left:359.00px;top:311.50px;font-size:16px;line-height:22px;color:#3a3a3a;font-weight:700;font-style:normal;font-family:'Liberation Sans', sans-serif;transform:scaleX(0.9928);transform-origin:0 50%;">Content</span>
<span class="t" style="left:599.00px;top:311.50px;font-size:16px;line-height:22px;color:#3a3a3a;font-weight:700;font-style:normal;font-family:'Liberation Sans', sans-serif;transform:scaleX(1.0097);transform-origin:0 50%;">Name</span>
<span class="t" style="left:854.00px;top:311.50px;font-size:16px;line-height:22px;color:#3a3a3a;font-weight:700;font-style:normal;font-family:'Liberation Sans', sans-serif;transform:scaleX(0.9546);transform-origin:0 50%;">Extension</span>
<span class="t" style="left:1094.00px;top:311.50px;font-size:16px;line-height:22px;color:#3a3a3a;font-weight:700;font-style:normal;font-family:'Liberation Sans', sans-serif;transform:scaleX(0.9444);transform-origin:0 50%;">Date accessed</span>
<span class="t" style="left:1334.00px;top:311.50px;font-size:16px;line-height:22px;color:#3a3a3a;font-weight:700;font-style:normal;font-family:'Liberation Sans', sans-serif;">Date modified</span>
<div class="a" style="left:280px;top:343px;width:41px;height:702px;background:#f0f0f0;"></div>
<div class="a" style="left:323px;top:343px;width:238px;height:702px;background:#d5efe1;"></div>
<div class="a" style="left:280px;top:374px;width:41px;height:2px;background:#e0e0e0;"></div>
<div class="a" style="left:323px;top:374px;width:238px;height:2px;background:#d2d8d4;"></div>
<div class="a" style="left:563px;top:374px;width:924px;height:2px;background:#dadada;"></div>
<div class="a" style="left:280px;top:405px;width:41px;height:2px;background:#e0e0e0;"></div>
<div class="a" style="left:323px;top:405px;width:238px;height:2px;background:#d2d8d4;"></div>
<div class="a" style="left:563px;top:405px;width:924px;height:2px;background:#dadada;"></div>
<div class="a" style="left:280px;top:437px;width:41px;height:2px;background:#e0e0e0;"></div>
<div class="a" style="left:323px;top:437px;width:238px;height:2px;background:#d2d8d4;"></div>
<div class="a" style="left:563px;top:437px;width:924px;height:2px;background:#dadada;"></div>
<div class="a" style="left:280px;top:468px;width:41px;height:2px;background:#e0e0e0;"></div>
<div class="a" style="left:323px;top:468px;width:238px;height:2px;background:#d2d8d4;"></div>
<div class="a" style="left:563px;top:468px;width:924px;height:2px;background:#dadada;"></div>
<div class="a" style="left:280px;top:500px;width:41px;height:2px;background:#e0e0e0;"></div>
<div class="a" style="left:323px;top:500px;width:238px;height:2px;background:#d2d8d4;"></div>
<div class="a" style="left:563px;top:500px;width:924px;height:2px;background:#dadada;"></div>
<div class="a" style="left:280px;top:531px;width:41px;height:2px;background:#e0e0e0;"></div>
<div class="a" style="left:323px;top:531px;width:238px;height:2px;background:#d2d8d4;"></div>
<div class="a" style="left:563px;top:531px;width:924px;height:2px;background:#dadada;"></div>
<div class="a" style="left:280px;top:563px;width:41px;height:2px;background:#e0e0e0;"></div>
<div class="a" style="left:323px;top:563px;width:238px;height:2px;background:#d2d8d4;"></div>
<div class="a" style="left:563px;top:563px;width:924px;height:2px;background:#dadada;"></div>
<div class="a" style="left:280px;top:594px;width:41px;height:2px;background:#e0e0e0;"></div>
<div class="a" style="left:323px;top:594px;width:238px;height:2px;background:#d2d8d4;"></div>
<div class="a" style="left:563px;top:594px;width:924px;height:2px;background:#dadada;"></div>
<div class="a" style="left:280px;top:626px;width:41px;height:2px;background:#e0e0e0;"></div>
<div class="a" style="left:323px;top:626px;width:238px;height:2px;background:#d2d8d4;"></div>
<div class="a" style="left:563px;top:626px;width:924px;height:2px;background:#dadada;"></div>
<div class="a" style="left:280px;top:657px;width:41px;height:2px;background:#e0e0e0;"></div>
<div class="a" style="left:323px;top:657px;width:238px;height:2px;background:#d2d8d4;"></div>
<div class="a" style="left:563px;top:657px;width:924px;height:2px;background:#dadada;"></div>
<div class="a" style="left:280px;top:689px;width:41px;height:2px;background:#e0e0e0;"></div>
<div class="a" style="left:323px;top:689px;width:238px;height:2px;background:#d2d8d4;"></div>
<div class="a" style="left:563px;top:689px;width:924px;height:2px;background:#dadada;"></div>
<div class="a" style="left:280px;top:720px;width:41px;height:2px;background:#e0e0e0;"></div>
<div class="a" style="left:323px;top:720px;width:238px;height:2px;background:#d2d8d4;"></div>
<div class="a" style="left:563px;top:720px;width:924px;height:2px;background:#dadada;"></div>
<div class="a" style="left:280px;top:752px;width:41px;height:2px;background:#e0e0e0;"></div>
<div class="a" style="left:323px;top:752px;width:238px;height:2px;background:#d2d8d4;"></div>
<div class="a" style="left:563px;top:752px;width:924px;height:2px;background:#dadada;"></div>
<div class="a" style="left:280px;top:783px;width:41px;height:2px;background:#e0e0e0;"></div>
<div class="a" style="left:323px;top:783px;width:238px;height:2px;background:#d2d8d4;"></div>
<div class="a" style="left:563px;top:783px;width:924px;height:2px;background:#dadada;"></div>
<div class="a" style="left:280px;top:815px;width:41px;height:2px;background:#e0e0e0;"></div>
<div class="a" style="left:323px;top:815px;width:238px;height:2px;background:#d2d8d4;"></div>
<div class="a" style="left:563px;top:815px;width:924px;height:2px;background:#dadada;"></div>
<div class="a" style="left:280px;top:846px;width:41px;height:2px;background:#e0e0e0;"></div>
<div class="a" style="left:323px;top:846px;width:238px;height:2px;background:#d2d8d4;"></div>
<div class="a" style="left:563px;top:846px;width:924px;height:2px;background:#dadada;"></div>
<div class="a" style="left:280px;top:878px;width:41px;height:2px;background:#e0e0e0;"></div>
<div class="a" style="left:323px;top:878px;width:238px;height:2px;background:#d2d8d4;"></div>
<div class="a" style="left:563px;top:878px;width:924px;height:2px;background:#dadada;"></div>
<div class="a" style="left:280px;top:909px;width:41px;height:2px;background:#e0e0e0;"></div>
<div class="a" style="left:323px;top:909px;width:238px;height:2px;background:#d2d8d4;"></div>
<div class="a" style="left:563px;top:909px;width:924px;height:2px;background:#dadada;"></div>
<div class="a" style="left:280px;top:941px;width:41px;height:2px;background:#e0e0e0;"></div>
<div class="a" style="left:323px;top:941px;width:238px;height:2px;background:#d2d8d4;"></div>
<div class="a" style="left:563px;top:941px;width:924px;height:2px;background:#dadada;"></div>
<div class="a" style="left:280px;top:972px;width:41px;height:2px;background:#e0e0e0;"></div>
<div class="a" style="left:323px;top:972px;width:238px;height:2px;background:#d2d8d4;"></div>
<div class="a" style="left:563px;top:972px;width:924px;height:2px;background:#dadada;"></div>
<div class="a" style="left:280px;top:1004px;width:41px;height:2px;background:#e0e0e0;"></div>
<div class="a" style="left:323px;top:1004px;width:238px;height:2px;background:#d2d8d4;"></div>
<div class="a" style="left:563px;top:1004px;width:924px;height:2px;background:#dadada;"></div>
<span class="t" style="left:295.50px;top:347.50px;font-size:17px;line-height:24px;color:#333;font-weight:400;font-style:normal;font-family:'Liberation Sans', sans-serif;transform:scaleX(1.0561);transform-origin:0 50%;">1</span>
<span class="t" style="left:328.00px;top:347.50px;font-size:16px;line-height:22px;color:#217346;font-weight:400;font-style:normal;font-family:'Liberation Sans', sans-serif;transform:scaleX(0.9921);transform-origin:0 50%;">Binary</span>
<span class="t" style="left:568.00px;top:347.50px;font-size:16px;line-height:22px;color:#262626;font-weight:400;font-style:normal;font-family:'Liberation Sans', sans-serif;transform:scaleX(1.0407);transform-origin:0 50%;">monthly_mdp_mesh1km.csv</span>
<span class="t" style="left:823.00px;top:347.50px;font-size:16px;line-height:22px;color:#262626;font-weight:400;font-style:normal;font-family:'Liberation Sans', sans-serif;transform:scaleX(0.9841);transform-origin:0 50%;">.csv</span>
<span class="t" style="left:1137.00px;top:347.50px;font-size:16px;line-height:22px;color:#262626;font-weight:400;font-style:italic;font-family:'Liberation Sans', sans-serif;transform:scaleX(1.0490);transform-origin:0 50%;">2026/01/14 13:29:13</span>
<span class="t" style="left:1377.00px;top:347.50px;font-size:16px;line-height:22px;color:#262626;font-weight:400;font-style:italic;font-family:'Liberation Sans', sans-serif;transform:scaleX(1.0490);transform-origin:0 50%;">2026/01/14 13:29:13</span>
<span class="t" style="left:295.50px;top:379.00px;font-size:17px;line-height:24px;color:#333;font-weight:400;font-style:normal;font-family:'Liberation Sans', sans-serif;transform:scaleX(1.0561);transform-origin:0 50%;">2</span>
<span class="t" style="left:328.00px;top:379.00px;font-size:16px;line-height:22px;color:#217346;font-weight:400;font-style:normal;font-family:'Liberation Sans', sans-serif;transform:scaleX(0.9921);transform-origin:0 50%;">Binary</span>
<span class="t" style="left:568.00px;top:379.00px;font-size:16px;line-height:22px;color:#262626;font-weight:400;font-style:normal;font-family:'Liberation Sans', sans-serif;transform:scaleX(1.0422);transform-origin:0 50%;">monthly_mdp_mesh1km.csv.zip</span>
<span class="t" style="left:823.00px;top:379.00px;font-size:16px;line-height:22px;color:#262626;font-weight:400;font-style:normal;font-family:'Liberation Sans', sans-serif;transform:scaleX(1.0439);transform-origin:0 50%;">.zip</span>
<span class="t" style="left:1137.00px;top:379.00px;font-size:16px;line-height:22px;color:#262626;font-weight:400;font-style:italic;font-family:'Liberation Sans', sans-serif;transform:scaleX(1.0490);transform-origin:0 50%;">2026/01/14 13:44:34</span>
<span class="t" style="left:1377.00px;top:379.00px;font-size:16px;line-height:22px;color:#262626;font-weight:400;font-style:italic;font-family:'Liberation Sans', sans-serif;transform:scaleX(1.0490);transform-origin:0 50%;">2026/01/14 12:44:34</span>
<span class="t" style="left:295.50px;top:410.50px;font-size:17px;line-height:24px;color:#333;font-weight:400;font-style:normal;font-family:'Liberation Sans', sans-serif;transform:scaleX(1.0561);transform-origin:0 50%;">3</span>
<span class="t" style="left:328.00px;top:410.50px;font-size:16px;line-height:22px;color:#217346;font-weight:400;font-style:normal;font-family:'Liberation Sans', sans-serif;transform:scaleX(0.9921);transform-origin:0 50%;">Binary</span>
<span class="t" style="left:568.00px;top:410.50px;font-size:16px;line-height:22px;color:#262626;font-weight:400;font-style:normal;font-family:'Liberation Sans', sans-serif;transform:scaleX(1.0407);transform-origin:0 50%;">monthly_mdp_mesh1km.csv</span>
<span class="t" style="left:823.00px;top:410.50px;font-size:16px;line-height:22px;color:#262626;font-weight:400;font-style:normal;font-family:'Liberation Sans', sans-serif;transform:scaleX(0.9841);transform-origin:0 50%;">.csv</span>
<span class="t" style="left:1137.00px;top:410.50px;font-size:16px;line-height:22px;color:#262626;font-weight:400;font-style:italic;font-family:'Liberation Sans', sans-serif;transform:scaleX(1.0490);transform-origin:0 50%;">2026/01/14 13:29:49</span>
<span class="t" style="left:1377.00px;top:410.50px;font-size:16px;line-height:22px;color:#262626;font-weight:400;font-style:italic;font-family:'Liberation Sans', sans-serif;transform:scaleX(1.0490);transform-origin:0 50%;">2026/01/14 13:29:49</span>
<span class="t" style="left:295.50px;top:442.00px;font-size:17px;line-height:24px;color:#333;font-weight:400;font-style:normal;font-family:'Liberation Sans', sans-serif;transform:scaleX(1.0561);transform-origin:0 50%;">4</span>
<span class="t" style="left:328.00px;top:442.00px;font-size:16px;line-height:22px;color:#217346;font-weight:400;font-style:normal;font-family:'Liberation Sans', sans-serif;transform:scaleX(0.9921);transform-origin:0 50%;">Binary</span>
<span class="t" style="left:568.00px;top:442.00px;font-size:16px;line-height:22px;color:#262626;font-weight:400;font-style:normal;font-family:'Liberation Sans', sans-serif;transform:scaleX(1.0422);transform-origin:0 50%;">monthly_mdp_mesh1km.csv.zip</span>
<span class="t" style="left:823.00px;top:442.00px;font-size:16px;line-height:22px;color:#262626;font-weight:400;font-style:normal;font-family:'Liberation Sans', sans-serif;transform:scaleX(1.0439);transform-origin:0 50%;">.zip</span>
<span class="t" style="left:1137.00px;top:442.00px;font-size:16px;line-height:22px;color:#262626;font-weight:400;font-style:italic;font-family:'Liberation Sans', sans-serif;transform:scaleX(1.0490);transform-origin:0 50%;">2026/01/14 13:29:44</span>
<span class="t" style="left:1377.00px;top:442.00px;font-size:16px;line-height:22px;color:#262626;font-weight:400;font-style:italic;font-family:'Liberation Sans', sans-serif;transform:scaleX(1.0490);transform-origin:0 50%;">2026/01/14 12:29:44</span>
<span class="t" style="left:295.50px;top:473.50px;font-size:17px;line-height:24px;color:#333;font-weight:400;font-style:normal;font-family:'Liberation Sans', sans-serif;transform:scaleX(1.0561);transform-origin:0 50%;">5</span>
<span class="t" style="left:328.00px;top:473.50px;font-size:16px;line-height:22px;color:#217346;font-weight:400;font-style:normal;font-family:'Liberation Sans', sans-serif;transform:scaleX(0.9921);transform-origin:0 50%;">Binary</span>
<span class="t" style="left:568.00px;top:473.50px;font-size:16px;line-height:22px;color:#262626;font-weight:400;font-style:normal;font-family:'Liberation Sans', sans-serif;transform:scaleX(1.0407);transform-origin:0 50%;">monthly_mdp_mesh1km.csv</span>
<span class="t" style="left:823.00px;top:473.50px;font-size:16px;line-height:22px;color:#262626;font-weight:400;font-style:normal;font-family:'Liberation Sans', sans-serif;transform:scaleX(0.9841);transform-origin:0 50%;">.csv</span>
<span class="t" style="left:1137.00px;top:473.50px;font-size:16px;line-height:22px;color:#262626;font-weight:400;font-style:italic;font-family:'Liberation Sans', sans-serif;transform:scaleX(1.0490);transform-origin:0 50%;">2026/01/14 13:30:13</span>
<span class="t" style="left:1377.00px;top:473.50px;font-size:16px;line-height:22px;color:#262626;font-weight:400;font-style:italic;font-family:'Liberation Sans', sans-serif;transform:scaleX(1.0490);transform-origin:0 50%;">2026/01/14 13:30:13</span>
<span class="t" style="left:295.50px;top:505.00px;font-size:17px;line-height:24px;color:#333;font-weight:400;font-style:normal;font-family:'Liberation Sans', sans-serif;transform:scaleX(1.0561);transform-origin:0 50%;">6</span>
<span class="t" style="left:328.00px;top:505.00px;font-size:16px;line-height:22px;color:#217346;font-weight:400;font-style:normal;font-family:'Liberation Sans', sans-serif;transform:scaleX(0.9921);transform-origin:0 50%;">Binary</span>
<span class="t" style="left:568.00px;top:505.00px;font-size:16px;line-height:22px;color:#262626;font-weight:400;font-style:normal;font-family:'Liberation Sans', sans-serif;transform:scaleX(1.0422);transform-origin:0 50%;">monthly_mdp_mesh1km.csv.zip</span>
<span class="t" style="left:823.00px;top:505.00px;font-size:16px;line-height:22px;color:#262626;font-weight:400;font-style:normal;font-family:'Liberation Sans', sans-serif;transform:scaleX(1.0439);transform-origin:0 50%;">.zip</span>
<span class="t" style="left:1137.00px;top:505.00px;font-size:16px;line-height:22px;color:#262626;font-weight:400;font-style:italic;font-family:'Liberation Sans', sans-serif;transform:scaleX(1.0490);transform-origin:0 50%;">2026/01/14 13:30:04</span>
<span class="t" style="left:1377.00px;top:505.00px;font-size:16px;line-height:22px;color:#262626;font-weight:400;font-style:italic;font-family:'Liberation Sans', sans-serif;transform:scaleX(1.0490);transform-origin:0 50%;">2026/01/14 12:30:04</span>
<span class="t" style="left:295.50px;top:536.50px;font-size:17px;line-height:24px;color:#333;font-weight:400;font-style:normal;font-family:'Liberation Sans', sans-serif;transform:scaleX(1.0561);transform-origin:0 50%;">7</span>
<span class="t" style="left:328.00px;top:536.50px;font-size:16px;line-height:22px;color:#217346;font-weight:400;font-style:normal;font-family:'Liberation Sans', sans-serif;transform:scaleX(0.9921);transform-origin:0 50%;">Binary</span>
<span class="t" style="left:568.00px;top:536.50px;font-size:16px;line-height:22px;color:#262626;font-weight:400;font-style:normal;font-family:'Liberation Sans', sans-serif;transform:scaleX(1.0407);transform-origin:0 50%;">monthly_mdp_mesh1km.csv</span>
<span class="t" style="left:823.00px;top:536.50px;font-size:16px;line-height:22px;color:#262626;font-weight:400;font-style:normal;font-family:'Liberation Sans', sans-serif;transform:scaleX(0.9841);transform-origin:0 50%;">.csv</span>
<span class="t" style="left:1137.00px;top:536.50px;font-size:16px;line-height:22px;color:#262626;font-weight:400;font-style:italic;font-family:'Liberation Sans', sans-serif;transform:scaleX(1.0490);transform-origin:0 50%;">2026/01/14 13:30:22</span>
<span class="t" style="left:1377.00px;top:536.50px;font-size:16px;line-height:22px;color:#262626;font-weight:400;font-style:italic;font-family:'Liberation Sans', sans-serif;transform:scaleX(1.0490);transform-origin:0 50%;">2026/01/14 13:30:22</span>
<span class="t" style="left:295.50px;top:568.00px;font-size:17px;line-height:24px;color:#333;font-weight:400;font-style:normal;font-family:'Liberation Sans', sans-serif;transform:scaleX(1.0561);transform-origin:0 50%;">8</span>
<span class="t" style="left:328.00px;top:568.00px;font-size:16px;line-height:22px;color:#217346;font-weight:400;font-style:normal;font-family:'Liberation Sans', sans-serif;transform:scaleX(0.9921);transform-origin:0 50%;">Binary</span>
<span class="t" style="left:568.00px;top:568.00px;font-size:16px;line-height:22px;color:#262626;font-weight:400;font-style:normal;font-family:'Liberation Sans', sans-serif;transform:scaleX(1.0422);transform-origin:0 50%;">monthly_mdp_mesh1km.csv.zip</span>
<span class="t" style="left:823.00px;top:568.00px;font-size:16px;line-height:22px;color:#262626;font-weight:400;font-style:normal;font-family:'Liberation Sans', sans-serif;transform:scaleX(1.0439);transform-origin:0 50%;">.zip</span>
<span class="t" style="left:1137.00px;top:568.00px;font-size:16px;line-height:22px;color:#262626;font-weight:400;font-style:italic;font-family:'Liberation Sans', sans-serif;transform:scaleX(1.0490);transform-origin:0 50%;">2026/01/14 13:30:19</span>
<span class="t" style="left:1377.00px;top:568.00px;font-size:16px;line-height:22px;color:#262626;font-weight:400;font-style:italic;font-family:'Liberation Sans', sans-serif;transform:scaleX(1.0490);transform-origin:0 50%;">2026/01/14 12:30:19</span>
<span class="t" style="left:295.50px;top:599.50px;font-size:17px;line-height:24px;color:#333;font-weight:400;font-style:normal;font-family:'Liberation Sans', sans-serif;transform:scaleX(1.0561);transform-origin:0 50%;">9</span>
<span class="t" style="left:328.00px;top:599.50px;font-size:16px;line-height:22px;color:#217346;font-weight:400;font-style:normal;font-family:'Liberation Sans', sans-serif;transform:scaleX(0.9921);transform-origin:0 50%;">Binary</span>
<span class="t" style="left:568.00px;top:599.50px;font-size:16px;line-height:22px;color:#262626;font-weight:400;font-style:normal;font-family:'Liberation Sans', sans-serif;transform:scaleX(1.0407);transform-origin:0 50%;">monthly_mdp_mesh1km.csv</span>
<span class="t" style="left:823.00px;top:599.50px;font-size:16px;line-height:22px;color:#262626;font-weight:400;font-style:normal;font-family:'Liberation Sans', sans-serif;transform:scaleX(0.9841);transform-origin:0 50%;">.csv</span>
<span class="t" style="left:1137.00px;top:599.50px;font-size:16px;line-height:22px;color:#262626;font-weight:400;font-style:italic;font-family:'Liberation Sans', sans-serif;transform:scaleX(1.0490);transform-origin:0 50%;">2026/01/14 13:34:29</span>
<span class="t" style="left:1377.00px;top:599.50px;font-size:16px;line-height:22px;color:#262626;font-weight:400;font-style:italic;font-family:'Liberation Sans', sans-serif;transform:scaleX(1.0490);transform-origin:0 50%;">2026/01/14 13:34:29</span>
<span class="t" style="left:290.50px;top:631.00px;font-size:17px;line-height:24px;color:#333;font-weight:400;font-style:normal;font-family:'Liberation Sans', sans-serif;transform:scaleX(1.0570);transform-origin:0 50%;">10</span>
<span class="t" style="left:328.00px;top:631.00px;font-size:16px;line-height:22px;color:#217346;font-weight:400;font-style:normal;font-family:'Liberation Sans', sans-serif;transform:scaleX(0.9921);transform-origin:0 50%;">Binary</span>
<span class="t" style="left:568.00px;top:631.00px;font-size:16px;line-height:22px;color:#262626;font-weight:400;font-style:normal;font-family:'Liberation Sans', sans-serif;transform:scaleX(1.0422);transform-origin:0 50%;">monthly_mdp_mesh1km.csv.zip</span>
<span class="t" style="left:823.00px;top:631.00px;font-size:16px;line-height:22px;color:#262626;font-weight:400;font-style:normal;font-family:'Liberation Sans', sans-serif;transform:scaleX(1.0439);transform-origin:0 50%;">.zip</span>
<span class="t" style="left:1137.00px;top:631.00px;font-size:16px;line-height:22px;color:#262626;font-weight:400;font-style:italic;font-family:'Liberation Sans', sans-serif;transform:scaleX(1.0490);transform-origin:0 50%;">2026/01/14 13:34:13</span>
<span class="t" style="left:1377.00px;top:631.00px;font-size:16px;line-height:22px;color:#262626;font-weight:400;font-style:italic;font-family:'Liberation Sans', sans-serif;transform:scaleX(1.0490);transform-origin:0 50%;">2026/01/14 12:34:13</span>
<span class="t" style="left:290.50px;top:662.50px;font-size:17px;line-height:24px;color:#333;font-weight:400;font-style:normal;font-family:'Liberation Sans', sans-serif;transform:scaleX(1.1327);transform-origin:0 50%;">11</span>
<span class="t" style="left:328.00px;top:662.50px;font-size:16px;line-height:22px;color:#217346;font-weight:400;font-style:normal;font-family:'Liberation Sans', sans-serif;transform:scaleX(0.9921);transform-origin:0 50%;">Binary</span>
<span class="t" style="left:568.00px;top:662.50px;font-size:16px;line-height:22px;color:#262626;font-weight:400;font-style:normal;font-family:'Liberation Sans', sans-serif;transform:scaleX(1.0407);transform-origin:0 50%;">monthly_mdp_mesh1km.csv</span>
<span class="t" style="left:823.00px;top:662.50px;font-size:16px;line-height:22px;color:#262626;font-weight:400;font-style:normal;font-family:'Liberation Sans', sans-serif;transform:scaleX(0.9841);transform-origin:0 50%;">.csv</span>
<span class="t" style="left:1137.00px;top:662.50px;font-size:16px;line-height:22px;color:#262626;font-weight:400;font-style:italic;font-family:'Liberation Sans', sans-serif;transform:scaleX(1.0490);transform-origin:0 50%;">2026/01/14 13:34:37</span>
<span class="t" style="left:1377.00px;top:662.50px;font-size:16px;line-height:22px;color:#262626;font-weight:400;font-style:italic;font-family:'Liberation Sans', sans-serif;transform:scaleX(1.0490);transform-origin:0 50%;">2026/01/14 13:34:37</span>
<span class="t" style="left:290.50px;top:694.00px;font-size:17px;line-height:24px;color:#333;font-weight:400;font-style:normal;font-family:'Liberation Sans', sans-serif;transform:scaleX(1.0570);transform-origin:0 50%;">12</span>
<span class="t" style="left:328.00px;top:694.00px;font-size:16px;line-height:22px;color:#217346;font-weight:400;font-style:normal;font-family:'Liberation Sans', sans-serif;transform:scaleX(0.9921);transform-origin:0 50%;">Binary</span>
<span class="t" style="left:568.00px;top:694.00px;font-size:16px;line-height:22px;color:#262626;font-weight:400;font-style:normal;font-family:'Liberation Sans', sans-serif;transform:scaleX(1.0422);transform-origin:0 50%;">monthly_mdp_mesh1km.csv.zip</span>
<span class="t" style="left:823.00px;top:694.00px;font-size:16px;line-height:22px;color:#262626;font-weight:400;font-style:normal;font-family:'Liberation Sans', sans-serif;transform:scaleX(1.0439);transform-origin:0 50%;">.zip</span>
<span class="t" style="left:1137.00px;top:694.00px;font-size:16px;line-height:22px;color:#262626;font-weight:400;font-style:italic;font-family:'Liberation Sans', sans-serif;transform:scaleX(1.0490);transform-origin:0 50%;">2026/01/14 13:34:34</span>
<span class="t" style="left:1377.00px;top:694.00px;font-size:16px;line-height:22px;color:#262626;font-weight:400;font-style:italic;font-family:'Liberation Sans', sans-serif;transform:scaleX(1.0490);transform-origin:0 50%;">2026/01/14 12:34:34</span>
<span class="t" style="left:290.50px;top:725.50px;font-size:17px;line-height:24px;color:#333;font-weight:400;font-style:normal;font-family:'Liberation Sans', sans-serif;transform:scaleX(1.0570);transform-origin:0 50%;">13</span>
<span class="t" style="left:328.00px;top:725.50px;font-size:16px;line-height:22px;color:#217346;font-weight:400;font-style:normal;font-family:'Liberation Sans', sans-serif;transform:scaleX(0.9921);transform-origin:0 50%;">Binary</span>
<span class="t" style="left:568.00px;top:725.50px;font-size:16px;line-height:22px;color:#262626;font-weight:400;font-style:normal;font-family:'Liberation Sans', sans-serif;transform:scaleX(1.0407);transform-origin:0 50%;">monthly_mdp_mesh1km.csv</span>
<span class="t" style="left:823.00px;top:725.50px;font-size:16px;line-height:22px;color:#262626;font-weight:400;font-style:normal;font-family:'Liberation Sans', sans-serif;transform:scaleX(0.9841);transform-origin:0 50%;">.csv</span>
<span class="t" style="left:1137.00px;top:725.50px;font-size:16px;line-height:22px;color:#262626;font-weight:400;font-style:italic;font-family:'Liberation Sans', sans-serif;transform:scaleX(1.0490);transform-origin:0 50%;">2026/01/14 13:34:46</span>
<span class="t" style="left:1377.00px;top:725.50px;font-size:16px;line-height:22px;color:#262626;font-weight:400;font-style:italic;font-family:'Liberation Sans', sans-serif;transform:scaleX(1.0490);transform-origin:0 50%;">2026/01/14 13:34:46</span>
<span class="t" style="left:290.50px;top:757.00px;font-size:17px;line-height:24px;color:#333;font-weight:400;font-style:normal;font-family:'Liberation Sans', sans-serif;transform:scaleX(1.0570);transform-origin:0 50%;">14</span>
<span class="t" style="left:328.00px;top:757.00px;font-size:16px;line-height:22px;color:#217346;font-weight:400;font-style:normal;font-family:'Liberation Sans', sans-serif;transform:scaleX(0.9921);transform-origin:0 50%;">Binary</span>
<span class="t" style="left:568.00px;top:757.00px;font-size:16px;line-height:22px;color:#262626;font-weight:400;font-style:normal;font-family:'Liberation Sans', sans-serif;transform:scaleX(1.0422);transform-origin:0 50%;">monthly_mdp_mesh1km.csv.zip</span>
<span class="t" style="left:823.00px;top:757.00px;font-size:16px;line-height:22px;color:#262626;font-weight:400;font-style:normal;font-family:'Liberation Sans', sans-serif;transform:scaleX(1.0439);transform-origin:0 50%;">.zip</span>
<span class="t" style="left:1137.00px;top:757.00px;font-size:16px;line-height:22px;color:#262626;font-weight:400;font-style:italic;font-family:'Liberation Sans', sans-serif;transform:scaleX(1.0490);transform-origin:0 50%;">2026/01/14 13:34:42</span>
<span class="t" style="left:1377.00px;top:757.00px;font-size:16px;line-height:22px;color:#262626;font-weight:400;font-style:italic;font-family:'Liberation Sans', sans-serif;transform:scaleX(1.0490);transform-origin:0 50%;">2026/01/14 12:34:42</span>
<span class="t" style="left:290.50px;top:788.50px;font-size:17px;line-height:24px;color:#333;font-weight:400;font-style:normal;font-family:'Liberation Sans', sans-serif;transform:scaleX(1.0570);transform-origin:0 50%;">15</span>
<span class="t" style="left:328.00px;top:788.50px;font-size:16px;line-height:22px;color:#217346;font-weight:400;font-style:normal;font-family:'Liberation Sans', sans-serif;transform:scaleX(0.9921);transform-origin:0 50%;">Binary</span>
<span class="t" style="left:568.00px;top:788.50px;font-size:16px;line-height:22px;color:#262626;font-weight:400;font-style:normal;font-family:'Liberation Sans', sans-serif;transform:scaleX(1.0407);transform-origin:0 50%;">monthly_mdp_mesh1km.csv</span>
<span class="t" style="left:823.00px;top:788.50px;font-size:16px;line-height:22px;color:#262626;font-weight:400;font-style:normal;font-family:'Liberation Sans', sans-serif;transform:scaleX(0.9841);transform-origin:0 50%;">.csv</span>
<span class="t" style="left:1137.00px;top:788.50px;font-size:16px;line-height:22px;color:#262626;font-weight:400;font-style:italic;font-family:'Liberation Sans', sans-serif;transform:scaleX(1.0490);transform-origin:0 50%;">2026/01/14 13:34:55</span>
<span class="t" style="left:1377.00px;top:788.50px;font-size:16px;line-height:22px;color:#262626;font-weight:400;font-style:italic;font-family:'Liberation Sans', sans-serif;transform:scaleX(1.0490);transform-origin:0 50%;">2026/01/14 13:34:55</span>
<span class="t" style="left:290.50px;top:820.00px;font-size:17px;line-height:24px;color:#333;font-weight:400;font-style:normal;font-family:'Liberation Sans', sans-serif;transform:scaleX(1.0570);transform-origin:0 50%;">16</span>
<span class="t" style="left:328.00px;top:820.00px;font-size:16px;line-height:22px;color:#217346;font-weight:400;font-style:normal;font-family:'Liberation Sans', sans-serif;transform:scaleX(0.9921);transform-origin:0 50%;">Binary</span>
<span class="t" style="left:568.00px;top:820.00px;font-size:16px;line-height:22px;color:#262626;font-weight:400;font-style:normal;font-family:'Liberation Sans', sans-serif;transform:scaleX(1.0422);transform-origin:0 50%;">monthly_mdp_mesh1km.csv.zip</span>
<span class="t" style="left:823.00px;top:820.00px;font-size:16px;line-height:22px;color:#262626;font-weight:400;font-style:normal;font-family:'Liberation Sans', sans-serif;transform:scaleX(1.0439);transform-origin:0 50%;">.zip</span>
<span class="t" style="left:1137.00px;top:820.00px;font-size:16px;line-height:22px;color:#262626;font-weight:400;font-style:italic;font-family:'Liberation Sans', sans-serif;transform:scaleX(1.0490);transform-origin:0 50%;">2026/01/14 13:34:52</span>
<span class="t" style="left:1377.00px;top:820.00px;font-size:16px;line-height:22px;color:#262626;font-weight:400;font-style:italic;font-family:'Liberation Sans', sans-serif;transform:scaleX(1.0490);transform-origin:0 50%;">2026/01/14 12:34:52</span>
<span class="t" style="left:290.50px;top:851.50px;font-size:17px;line-height:24px;color:#333;font-weight:400;font-style:normal;font-family:'Liberation Sans', sans-serif;transform:scaleX(1.0570);transform-origin:0 50%;">17</span>
<span class="t" style="left:328.00px;top:851.50px;font-size:16px;line-height:22px;color:#217346;font-weight:400;font-style:normal;font-family:'Liberation Sans', sans-serif;transform:scaleX(0.9921);transform-origin:0 50%;">Binary</span>
<span class="t" style="left:568.00px;top:851.50px;font-size:16px;line-height:22px;color:#262626;font-weight:400;font-style:normal;font-family:'Liberation Sans', sans-serif;transform:scaleX(1.0407);transform-origin:0 50%;">monthly_mdp_mesh1km.csv</span>
<span class="t" style="left:823.00px;top:851.50px;font-size:16px;line-height:22px;color:#262626;font-weight:400;font-style:normal;font-family:'Liberation Sans', sans-serif;transform:scaleX(0.9841);transform-origin:0 50%;">.csv</span>
<span class="t" style="left:1137.00px;top:851.50px;font-size:16px;line-height:22px;color:#262626;font-weight:400;font-style:italic;font-family:'Liberation Sans', sans-serif;transform:scaleX(1.0490);transform-origin:0 50%;">2026/01/14 13:35:06</span>
<span class="t" style="left:1377.00px;top:851.50px;font-size:16px;line-height:22px;color:#262626;font-weight:400;font-style:italic;font-family:'Liberation Sans', sans-serif;transform:scaleX(1.0490);transform-origin:0 50%;">2026/01/14 13:35:06</span>
<span class="t" style="left:290.50px;top:883.00px;font-size:17px;line-height:24px;color:#333;font-weight:400;font-style:normal;font-family:'Liberation Sans', sans-serif;transform:scaleX(1.0570);transform-origin:0 50%;">18</span>
<span class="t" style="left:328.00px;top:883.00px;font-size:16px;line-height:22px;color:#217346;font-weight:400;font-style:normal;font-family:'Liberation Sans', sans-serif;transform:scaleX(0.9921);transform-origin:0 50%;">Binary</span>
<span class="t" style="left:568.00px;top:883.00px;font-size:16px;line-height:22px;color:#262626;font-weight:400;font-style:normal;font-family:'Liberation Sans', sans-serif;transform:scaleX(1.0422);transform-origin:0 50%;">monthly_mdp_mesh1km.csv.zip</span>
<span class="t" style="left:823.00px;top:883.00px;font-size:16px;line-height:22px;color:#262626;font-weight:400;font-style:normal;font-family:'Liberation Sans', sans-serif;transform:scaleX(1.0439);transform-origin:0 50%;">.zip</span>
<span class="t" style="left:1137.00px;top:883.00px;font-size:16px;line-height:22px;color:#262626;font-weight:400;font-style:italic;font-family:'Liberation Sans', sans-serif;transform:scaleX(1.0490);transform-origin:0 50%;">2026/01/14 13:35:02</span>
<span class="t" style="left:1377.00px;top:883.00px;font-size:16px;line-height:22px;color:#262626;font-weight:400;font-style:italic;font-family:'Liberation Sans', sans-serif;transform:scaleX(1.0490);transform-origin:0 50%;">2026/01/14 12:35:02</span>
<span class="t" style="left:290.50px;top:914.50px;font-size:17px;line-height:24px;color:#333;font-weight:400;font-style:normal;font-family:'Liberation Sans', sans-serif;transform:scaleX(1.0570);transform-origin:0 50%;">19</span>
<span class="t" style="left:328.00px;top:914.50px;font-size:16px;line-height:22px;color:#217346;font-weight:400;font-style:normal;font-family:'Liberation Sans', sans-serif;transform:scaleX(0.9921);transform-origin:0 50%;">Binary</span>
<span class="t" style="left:568.00px;top:914.50px;font-size:16px;line-height:22px;color:#262626;font-weight:400;font-style:normal;font-family:'Liberation Sans', sans-serif;transform:scaleX(1.0407);transform-origin:0 50%;">monthly_mdp_mesh1km.csv</span>
<span class="t" style="left:823.00px;top:914.50px;font-size:16px;line-height:22px;color:#262626;font-weight:400;font-style:normal;font-family:'Liberation Sans', sans-serif;transform:scaleX(0.9841);transform-origin:0 50%;">.csv</span>
<span class="t" style="left:1137.00px;top:914.50px;font-size:16px;line-height:22px;color:#262626;font-weight:400;font-style:italic;font-family:'Liberation Sans', sans-serif;transform:scaleX(1.0490);transform-origin:0 50%;">2026/01/14 13:35:17</span>
<span class="t" style="left:1377.00px;top:914.50px;font-size:16px;line-height:22px;color:#262626;font-weight:400;font-style:italic;font-family:'Liberation Sans', sans-serif;transform:scaleX(1.0490);transform-origin:0 50%;">2026/01/14 13:35:17</span>
<span class="t" style="left:290.50px;top:946.00px;font-size:17px;line-height:24px;color:#333;font-weight:400;font-style:normal;font-family:'Liberation Sans', sans-serif;transform:scaleX(1.0570);transform-origin:0 50%;">20</span>
<span class="t" style="left:328.00px;top:946.00px;font-size:16px;line-height:22px;color:#217346;font-weight:400;font-style:normal;font-family:'Liberation Sans', sans-serif;transform:scaleX(0.9921);transform-origin:0 50%;">Binary</span>
<span class="t" style="left:568.00px;top:946.00px;font-size:16px;line-height:22px;color:#262626;font-weight:400;font-style:normal;font-family:'Liberation Sans', sans-serif;transform:scaleX(1.0422);transform-origin:0 50%;">monthly_mdp_mesh1km.csv.zip</span>
<span class="t" style="left:823.00px;top:946.00px;font-size:16px;line-height:22px;color:#262626;font-weight:400;font-style:normal;font-family:'Liberation Sans', sans-serif;transform:scaleX(1.0439);transform-origin:0 50%;">.zip</span>
<span class="t" style="left:1137.00px;top:946.00px;font-size:16px;line-height:22px;color:#262626;font-weight:400;font-style:italic;font-family:'Liberation Sans', sans-serif;transform:scaleX(1.0490);transform-origin:0 50%;">2026/01/14 13:35:13</span>
<span class="t" style="left:1377.00px;top:946.00px;font-size:16px;line-height:22px;color:#262626;font-weight:400;font-style:italic;font-family:'Liberation Sans', sans-serif;transform:scaleX(1.0490);transform-origin:0 50%;">2026/01/14 12:35:13</span>
<span class="t" style="left:290.50px;top:977.50px;font-size:17px;line-height:24px;color:#333;font-weight:400;font-style:normal;font-family:'Liberation Sans', sans-serif;transform:scaleX(1.0570);transform-origin:0 50%;">21</span>
<span class="t" style="left:328.00px;top:977.50px;font-size:16px;line-height:22px;color:#217346;font-weight:400;font-style:normal;font-family:'Liberation Sans', sans-serif;transform:scaleX(0.9921);transform-origin:0 50%;">Binary</span>
<span class="t" style="left:568.00px;top:977.50px;font-size:16px;line-height:22px;color:#262626;font-weight:400;font-style:normal;font-family:'Liberation Sans', sans-serif;transform:scaleX(1.0407);transform-origin:0 50%;">monthly_mdp_mesh1km.csv</span>
<span class="t" style="left:823.00px;top:977.50px;font-size:16px;line-height:22px;color:#262626;font-weight:400;font-style:normal;font-family:'Liberation Sans', sans-serif;transform:scaleX(0.9841);transform-origin:0 50%;">.csv</span>
<span class="t" style="left:1137.00px;top:977.50px;font-size:16px;line-height:22px;color:#262626;font-weight:400;font-style:italic;font-family:'Liberation Sans', sans-serif;transform:scaleX(1.0490);transform-origin:0 50%;">2026/01/14 13:36:30</span>
<span class="t" style="left:1377.00px;top:977.50px;font-size:16px;line-height:22px;color:#262626;font-weight:400;font-style:italic;font-family:'Liberation Sans', sans-serif;transform:scaleX(1.0490);transform-origin:0 50%;">2026/01/14 13:36:30</span>
<span class="t" style="left:290.50px;top:1009.00px;font-size:17px;line-height:24px;color:#333;font-weight:400;font-style:normal;font-family:'Liberation Sans', sans-serif;transform:scaleX(1.0570);transform-origin:0 50%;">22</span>
<span class="t" style="left:328.00px;top:1009.00px;font-size:16px;line-height:22px;color:#217346;font-weight:400;font-style:normal;font-family:'Liberation Sans', sans-serif;transform:scaleX(0.9921);transform-origin:0 50%;">Binary</span>
<span class="t" style="left:568.00px;top:1009.00px;font-size:16px;line-height:22px;color:#262626;font-weight:400;font-style:normal;font-family:'Liberation Sans', sans-serif;transform:scaleX(1.0422);transform-origin:0 50%;">monthly_mdp_mesh1km.csv.zip</span>
<span class="t" style="left:823.00px;top:1009.00px;font-size:16px;line-height:22px;color:#262626;font-weight:400;font-style:normal;font-family:'Liberation Sans', sans-serif;transform:scaleX(1.0439);transform-origin:0 50%;">.zip</span>
<span class="t" style="left:1137.00px;top:1009.00px;font-size:16px;line-height:22px;color:#262626;font-weight:400;font-style:italic;font-family:'Liberation Sans', sans-serif;transform:scaleX(1.0490);transform-origin:0 50%;">2026/01/14 13:35:47</span>
<span class="t" style="left:1377.00px;top:1009.00px;font-size:16px;line-height:22px;color:#262626;font-weight:400;font-style:italic;font-family:'Liberation Sans', sans-serif;transform:scaleX(1.0490);transform-origin:0 50%;">2026/01/14 12:35:47</span>
<div class="a" style="left:1513px;top:306px;width:5px;height:739px;background:#ffffff;"></div>
<div class="a" style="left:280px;top:1035px;width:41px;height:2px;background:#e0e0e0;"></div>
<div class="a" style="left:1518px;top:241px;width:1px;height:804px;background:#d4d4d4;"></div>
<div class="a" style="left:280px;top:1036px;width:41px;height:9px;background:#f0f0f0;"></div>
<div class="a" style="left:1487px;top:343px;width:26px;height:702px;background:#f0f0f0;"></div>
<div class="a" style="left:323px;top:1020px;width:1164px;height:25px;background:#f0f0f0;"></div>
<div class="a" style="left:374px;top:1021px;width:579px;height:23px;background:#c8c8c8;"></div>
<svg class="a" style="left:345px;top:1023px" width="20" height="20" viewBox="0 0 20 20"><path d="M13 3 L5 10 L13 17" stroke="#606060" stroke-width="3.5" fill="none"/></svg>
<svg class="a" style="left:1444px;top:1023px" width="20" height="20" viewBox="0 0 20 20"><path d="M6 3 L14 10 L6 17" stroke="#606060" stroke-width="3.5" fill="none"/></svg>
<div class="a" style="left:1490px;top:394px;width:21px;height:245px;background:#c8c8c8;"></div>
<svg class="a" style="left:1489px;top:365px" width="22" height="20" viewBox="0 0 22 20"><path d="M3 14 L11 6 L19 14" stroke="#606060" stroke-width="3.5" fill="none"/></svg>
<svg class="a" style="left:1489px;top:977px" width="22" height="20" viewBox="0 0 22 20"><path d="M3 6 L11 14 L19 6" stroke="#606060" stroke-width="3.5" fill="none"/></svg>
<div class="a" style="left:1519px;top:241px;width:399px;height:804px;background:#ffffff;"></div>
<span class="t" style="left:1542.00px;top:261.50px;font-size:28px;line-height:39px;color:#217346;font-weight:400;font-style:normal;font-family:'Liberation Sans', sans-serif;transform:scaleX(1.0349);transform-origin:0 50%;">クエリの設定</span>
<svg class="a" style="left:1860px;top:276px" width="20" height="20" viewBox="0 0 20 20"><path d="M1 1 L18 18 M18 1 L1 18" stroke="#555" stroke-width="1.4"/></svg>
<svg class="a" style="left:1535px;top:336px" width="12" height="12" viewBox="0 0 12 12"><path d="M10.5 0.5 V10.5 H0.5 Z" fill="#444"/></svg>
<span class="t" style="left:1554.00px;top:330.00px;font-size:17px;line-height:24px;color:#217346;font-weight:700;font-style:normal;font-family:'Liberation Sans', sans-serif;transform:scaleX(1.0235);transform-origin:0 50%;">プロパティ</span>
<span class="t" style="left:1555.00px;top:359.00px;font-size:17px;line-height:24px;color:#3a3a3a;font-weight:400;font-style:normal;font-family:'Liberation Sans', sans-serif;transform:scaleX(1.0294);transform-origin:0 50%;">名前</span>
<div class="a" style="left:1555px;top:387px;width:327px;height:33px;background:#ffffff;border:2px solid #bdbdbd;box-sizing:border-box;"></div>
<span class="t" style="left:1564.00px;top:393.00px;font-size:17px;line-height:24px;color:#333;font-weight:400;font-style:normal;font-family:'Liberation Sans', sans-serif;transform:scaleX(0.9513);transform-origin:0 50%;">40</span>
<span class="t" style="left:1555.00px;top:430.00px;font-size:17px;line-height:24px;color:#3468ad;font-weight:400;font-style:normal;font-family:'Liberation Sans', sans-serif;transform:scaleX(1.0392);transform-origin:0 50%;">すべてのプロパティ</span>
<svg class="a" style="left:1535px;top:486px" width="12" height="12" viewBox="0 0 12 12"><path d="M10.5 0.5 V10.5 H0.5 Z" fill="#444"/></svg>
<span class="t" style="left:1554.00px;top:481.00px;font-size:17px;line-height:24px;color:#217346;font-weight:700;font-style:normal;font-family:'Liberation Sans', sans-serif;transform:scaleX(1.0515);transform-origin:0 50%;">適用したステップ</span>
<div class="a" style="left:1555px;top:514px;width:327px;height:501px;background:#ffffff;border:2px solid #c8c8c8;box-sizing:border-box;"></div>
<div class="a" style="left:1557px;top:516px;width:323px;height:30px;background:#d5efe1;"></div>
<span class="t" style="left:1586.00px;top:519.00px;font-size:17px;line-height:24px;color:#333;font-weight:400;font-style:normal;font-family:'Liberation Sans', sans-serif;transform:scaleX(1.0588);transform-origin:0 50%;">ソース</span>
<svg class="a" style="left:1852px;top:522px" width="16" height="16" viewBox="0 0 16 16"><g transform="translate(8 8)"><circle r="5" fill="#a0a0a0"/><rect x="-1.6" y="-7.2" width="3.2" height="3.5" fill="#a0a0a0" transform="rotate(0)"/><rect x="-1.6" y="-7.2" width="3.2" height="3.5" fill="#a0a0a0" transform="rotate(45)"/><rect x="-1.6" y="-7.2" width="3.2" height="3.5" fill="#a0a0a0" transform="rotate(90)"/><rect x="-1.6" y="-7.2" width="3.2" height="3.5" fill="#a0a0a0" transform="rotate(135)"/><rect x="-1.6" y="-7.2" width="3.2" height="3.5" fill="#a0a0a0" transform="rotate(180)"/><rect x="-1.6" y="-7.2" width="3.2" height="3.5" fill="#a0a0a0" transform="rotate(225)"/><rect x="-1.6" y="-7.2" width="3.2" height="3.5" fill="#a0a0a0" transform="rotate(270)"/><rect x="-1.6" y="-7.2" width="3.2" height="3.5" fill="#a0a0a0" transform="rotate(315)"/><circle r="2.2" fill="#d5efe1"/></g></svg>
<div class="a" style="left:2px;top:1045px;width:1916px;height:33px;background:#217346;border-radius:0 0 8px 8px;"></div>
<span class="t" style="left:10.00px;top:1049.00px;font-size:17px;line-height:24px;color:#ffffff;font-weight:400;font-style:normal;font-family:'Liberation Sans', sans-serif;transform:scaleX(0.9352);transform-origin:0 50%;">8 列, 72 行</span>
<span class="t" style="left:109.00px;top:1049.00px;font-size:17px;line-height:24px;color:#ffffff;font-weight:400;font-style:normal;font-family:'Liberation Sans', sans-serif;transform:scaleX(0.9635);transform-origin:0 50%;">上位 1000 行に基づく列のプロファイリング</span>
<span class="t" style="left:1587.00px;top:1049.00px;font-size:17px;line-height:24px;color:#ffffff;font-weight:400;font-style:normal;font-family:'Liberation Sans', sans-serif;transform:scaleX(0.9546);transform-origin:0 50%;">13:54 にダウンロードされたプレビューです</span>
</body></html>
